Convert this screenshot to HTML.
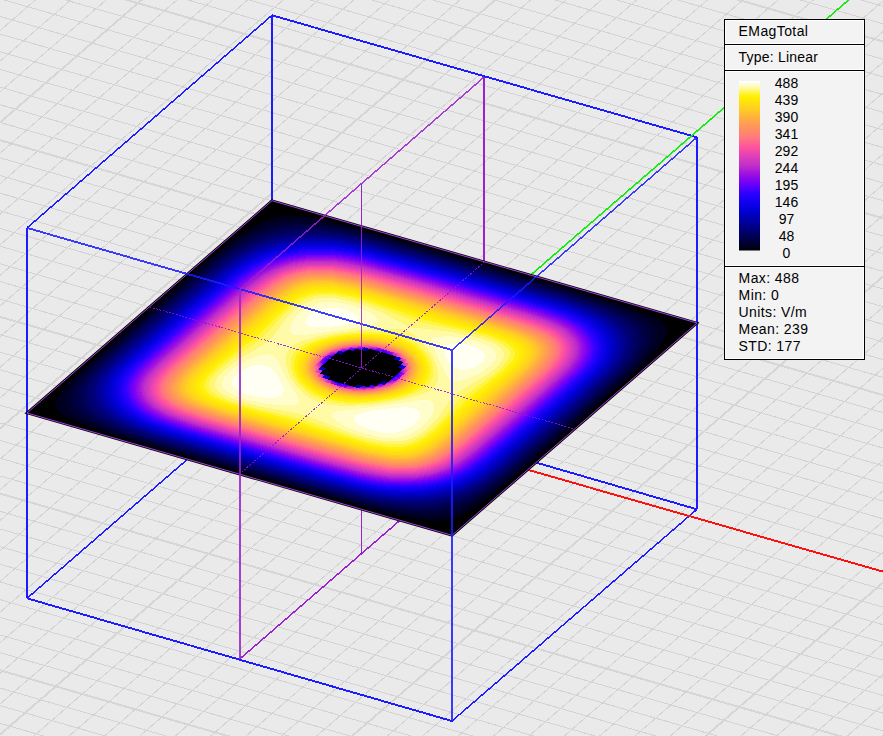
<!DOCTYPE html>
<html><head><meta charset="utf-8"><style>html,body{margin:0;padding:0;background:#eaeaea;overflow:hidden}svg{display:block}</style></head>
<body><svg width="883" height="736" viewBox="0 0 883 736">
<rect width="883" height="736" fill="#eaeaea"/>
<g shape-rendering="crispEdges"><line x1="-115.8" y1="-511.9" x2="2536.2" y2="253.7" stroke="#d3d3d3" stroke-width="1.00"/>
<line x1="-131.1" y1="-498.6" x2="2520.9" y2="267.0" stroke="#d3d3d3" stroke-width="1.00"/>
<line x1="-146.4" y1="-485.4" x2="2505.6" y2="280.2" stroke="#d3d3d3" stroke-width="1.00"/>
<line x1="-161.8" y1="-472.1" x2="2490.2" y2="293.5" stroke="#d3d3d3" stroke-width="1.00"/>
<line x1="-177.1" y1="-458.9" x2="2474.9" y2="306.7" stroke="#d3d3d3" stroke-width="1.00"/>
<line x1="-192.4" y1="-445.6" x2="2459.6" y2="320.0" stroke="#d6d6d6" stroke-width="2.00"/>
<line x1="-207.7" y1="-432.4" x2="2444.3" y2="333.2" stroke="#d3d3d3" stroke-width="1.00"/>
<line x1="-223.0" y1="-419.1" x2="2429.0" y2="346.5" stroke="#d3d3d3" stroke-width="1.00"/>
<line x1="-238.3" y1="-405.9" x2="2413.7" y2="359.7" stroke="#d3d3d3" stroke-width="1.00"/>
<line x1="-253.6" y1="-392.6" x2="2398.4" y2="373.0" stroke="#d3d3d3" stroke-width="1.00"/>
<line x1="-268.9" y1="-379.4" x2="2383.1" y2="386.2" stroke="#d3d3d3" stroke-width="1.00"/>
<line x1="-284.3" y1="-366.1" x2="2367.7" y2="399.5" stroke="#d3d3d3" stroke-width="1.00"/>
<line x1="-299.6" y1="-352.9" x2="2352.4" y2="412.7" stroke="#d3d3d3" stroke-width="1.00"/>
<line x1="-314.9" y1="-339.6" x2="2337.1" y2="426.0" stroke="#d3d3d3" stroke-width="1.00"/>
<line x1="-330.2" y1="-326.4" x2="2321.8" y2="439.2" stroke="#d3d3d3" stroke-width="1.00"/>
<line x1="-345.5" y1="-313.1" x2="2306.5" y2="452.5" stroke="#d6d6d6" stroke-width="2.00"/>
<line x1="-360.8" y1="-299.8" x2="2291.2" y2="465.8" stroke="#d3d3d3" stroke-width="1.00"/>
<line x1="-376.1" y1="-286.6" x2="2275.9" y2="479.0" stroke="#d3d3d3" stroke-width="1.00"/>
<line x1="-391.4" y1="-273.3" x2="2260.6" y2="492.3" stroke="#d3d3d3" stroke-width="1.00"/>
<line x1="-406.8" y1="-260.1" x2="2245.2" y2="505.5" stroke="#d3d3d3" stroke-width="1.00"/>
<line x1="-422.1" y1="-246.8" x2="2229.9" y2="518.8" stroke="#d3d3d3" stroke-width="1.00"/>
<line x1="-437.4" y1="-233.6" x2="2214.6" y2="532.0" stroke="#d3d3d3" stroke-width="1.00"/>
<line x1="-452.7" y1="-220.3" x2="2199.3" y2="545.3" stroke="#d3d3d3" stroke-width="1.00"/>
<line x1="-468.0" y1="-207.1" x2="2184.0" y2="558.5" stroke="#d3d3d3" stroke-width="1.00"/>
<line x1="-483.3" y1="-193.8" x2="2168.7" y2="571.8" stroke="#d3d3d3" stroke-width="1.00"/>
<line x1="-498.6" y1="-180.6" x2="2153.4" y2="585.0" stroke="#d6d6d6" stroke-width="2.00"/>
<line x1="-513.9" y1="-167.3" x2="2138.1" y2="598.3" stroke="#d3d3d3" stroke-width="1.00"/>
<line x1="-529.3" y1="-154.1" x2="2122.7" y2="611.5" stroke="#d3d3d3" stroke-width="1.00"/>
<line x1="-544.6" y1="-140.8" x2="2107.4" y2="624.8" stroke="#d3d3d3" stroke-width="1.00"/>
<line x1="-559.9" y1="-127.6" x2="2092.1" y2="638.0" stroke="#d3d3d3" stroke-width="1.00"/>
<line x1="-575.2" y1="-114.3" x2="2076.8" y2="651.3" stroke="#d3d3d3" stroke-width="1.00"/>
<line x1="-590.5" y1="-101.1" x2="2061.5" y2="664.5" stroke="#d3d3d3" stroke-width="1.00"/>
<line x1="-605.8" y1="-87.8" x2="2046.2" y2="677.8" stroke="#d3d3d3" stroke-width="1.00"/>
<line x1="-621.1" y1="-74.6" x2="2030.9" y2="691.0" stroke="#d3d3d3" stroke-width="1.00"/>
<line x1="-636.4" y1="-61.3" x2="2015.6" y2="704.3" stroke="#d3d3d3" stroke-width="1.00"/>
<line x1="-651.8" y1="-48.0" x2="2000.2" y2="717.6" stroke="#d6d6d6" stroke-width="2.00"/>
<line x1="-667.1" y1="-34.8" x2="1984.9" y2="730.8" stroke="#d3d3d3" stroke-width="1.00"/>
<line x1="-682.4" y1="-21.5" x2="1969.6" y2="744.1" stroke="#d3d3d3" stroke-width="1.00"/>
<line x1="-697.7" y1="-8.3" x2="1954.3" y2="757.3" stroke="#d3d3d3" stroke-width="1.00"/>
<line x1="-713.0" y1="5.0" x2="1939.0" y2="770.6" stroke="#d3d3d3" stroke-width="1.00"/>
<line x1="-728.3" y1="18.2" x2="1923.7" y2="783.8" stroke="#d3d3d3" stroke-width="1.00"/>
<line x1="-743.6" y1="31.5" x2="1908.4" y2="797.1" stroke="#d3d3d3" stroke-width="1.00"/>
<line x1="-759.0" y1="44.7" x2="1893.0" y2="810.3" stroke="#d3d3d3" stroke-width="1.00"/>
<line x1="-774.3" y1="58.0" x2="1877.7" y2="823.6" stroke="#d3d3d3" stroke-width="1.00"/>
<line x1="-789.6" y1="71.2" x2="1862.4" y2="836.8" stroke="#d3d3d3" stroke-width="1.00"/>
<line x1="-804.9" y1="84.5" x2="1847.1" y2="850.1" stroke="#d6d6d6" stroke-width="2.00"/>
<line x1="-820.2" y1="97.7" x2="1831.8" y2="863.3" stroke="#d3d3d3" stroke-width="1.00"/>
<line x1="-835.5" y1="111.0" x2="1816.5" y2="876.6" stroke="#d3d3d3" stroke-width="1.00"/>
<line x1="-850.8" y1="124.2" x2="1801.2" y2="889.8" stroke="#d3d3d3" stroke-width="1.00"/>
<line x1="-866.1" y1="137.5" x2="1785.9" y2="903.1" stroke="#d3d3d3" stroke-width="1.00"/>
<line x1="-881.5" y1="150.7" x2="1770.5" y2="916.3" stroke="#d3d3d3" stroke-width="1.00"/>
<line x1="-896.8" y1="164.0" x2="1755.2" y2="929.6" stroke="#d3d3d3" stroke-width="1.00"/>
<line x1="-912.1" y1="177.2" x2="1739.9" y2="942.8" stroke="#d3d3d3" stroke-width="1.00"/>
<line x1="-927.4" y1="190.5" x2="1724.6" y2="956.1" stroke="#d3d3d3" stroke-width="1.00"/>
<line x1="-942.7" y1="203.8" x2="1709.3" y2="969.4" stroke="#d3d3d3" stroke-width="1.00"/>
<line x1="-958.0" y1="217.0" x2="1694.0" y2="982.6" stroke="#d6d6d6" stroke-width="2.00"/>
<line x1="-973.3" y1="230.3" x2="1678.7" y2="995.9" stroke="#d3d3d3" stroke-width="1.00"/>
<line x1="-988.6" y1="243.5" x2="1663.4" y2="1009.1" stroke="#d3d3d3" stroke-width="1.00"/>
<line x1="-1004.0" y1="256.8" x2="1648.0" y2="1022.4" stroke="#d3d3d3" stroke-width="1.00"/>
<line x1="-1019.3" y1="270.0" x2="1632.7" y2="1035.6" stroke="#d3d3d3" stroke-width="1.00"/>
<line x1="-1034.6" y1="283.3" x2="1617.4" y2="1048.9" stroke="#d3d3d3" stroke-width="1.00"/>
<line x1="-1049.9" y1="296.5" x2="1602.1" y2="1062.1" stroke="#d3d3d3" stroke-width="1.00"/>
<line x1="-1065.2" y1="309.8" x2="1586.8" y2="1075.4" stroke="#d3d3d3" stroke-width="1.00"/>
<line x1="-1080.5" y1="323.0" x2="1571.5" y2="1088.6" stroke="#d3d3d3" stroke-width="1.00"/>
<line x1="-1095.8" y1="336.3" x2="1556.2" y2="1101.9" stroke="#d3d3d3" stroke-width="1.00"/>
<line x1="-1111.1" y1="349.5" x2="1540.9" y2="1115.1" stroke="#d6d6d6" stroke-width="2.00"/>
<line x1="-1126.5" y1="362.8" x2="1525.5" y2="1128.4" stroke="#d3d3d3" stroke-width="1.00"/>
<line x1="-1141.8" y1="376.0" x2="1510.2" y2="1141.6" stroke="#d3d3d3" stroke-width="1.00"/>
<line x1="-1157.1" y1="389.3" x2="1494.9" y2="1154.9" stroke="#d3d3d3" stroke-width="1.00"/>
<line x1="-1172.4" y1="402.5" x2="1479.6" y2="1168.1" stroke="#d3d3d3" stroke-width="1.00"/>
<line x1="-1187.7" y1="415.8" x2="1464.3" y2="1181.4" stroke="#d3d3d3" stroke-width="1.00"/>
<line x1="-1203.0" y1="429.0" x2="1449.0" y2="1194.6" stroke="#d3d3d3" stroke-width="1.00"/>
<line x1="-1218.3" y1="442.3" x2="1433.7" y2="1207.9" stroke="#d3d3d3" stroke-width="1.00"/>
<line x1="-1233.6" y1="455.6" x2="1418.4" y2="1221.2" stroke="#d3d3d3" stroke-width="1.00"/>
<line x1="-1249.0" y1="468.8" x2="1403.0" y2="1234.4" stroke="#d3d3d3" stroke-width="1.00"/>
<line x1="-1264.3" y1="482.1" x2="1387.7" y2="1247.7" stroke="#d6d6d6" stroke-width="2.00"/>
<line x1="-1279.6" y1="495.3" x2="1372.4" y2="1260.9" stroke="#d3d3d3" stroke-width="1.00"/>
<line x1="-1294.9" y1="508.6" x2="1357.1" y2="1274.2" stroke="#d3d3d3" stroke-width="1.00"/>
<line x1="-1310.2" y1="521.8" x2="1341.8" y2="1287.4" stroke="#d3d3d3" stroke-width="1.00"/>
<line x1="-1325.5" y1="535.1" x2="1326.5" y2="1300.7" stroke="#d3d3d3" stroke-width="1.00"/>
<line x1="-1340.8" y1="548.3" x2="1311.2" y2="1313.9" stroke="#d3d3d3" stroke-width="1.00"/>
<line x1="-1356.1" y1="561.6" x2="1295.9" y2="1327.2" stroke="#d3d3d3" stroke-width="1.00"/>
<line x1="-1371.5" y1="574.8" x2="1280.5" y2="1340.4" stroke="#d3d3d3" stroke-width="1.00"/>
<line x1="-1386.8" y1="588.1" x2="1265.2" y2="1353.7" stroke="#d3d3d3" stroke-width="1.00"/>
<line x1="-1402.1" y1="601.3" x2="1249.9" y2="1366.9" stroke="#d3d3d3" stroke-width="1.00"/>
<line x1="-1417.4" y1="614.6" x2="1234.6" y2="1380.2" stroke="#d6d6d6" stroke-width="2.00"/>
<line x1="-1432.7" y1="627.8" x2="1219.3" y2="1393.4" stroke="#d3d3d3" stroke-width="1.00"/>
<line x1="-1448.0" y1="641.1" x2="1204.0" y2="1406.7" stroke="#d3d3d3" stroke-width="1.00"/>
<line x1="-1463.3" y1="654.3" x2="1188.7" y2="1419.9" stroke="#d3d3d3" stroke-width="1.00"/>
<line x1="-1478.6" y1="667.6" x2="1173.4" y2="1433.2" stroke="#d3d3d3" stroke-width="1.00"/>
<line x1="-115.8" y1="-511.9" x2="-1494.0" y2="680.9" stroke="#d3d3d3" stroke-width="1.00"/>
<line x1="-89.3" y1="-504.2" x2="-1467.4" y2="688.5" stroke="#d3d3d3" stroke-width="1.00"/>
<line x1="-62.8" y1="-496.6" x2="-1440.9" y2="696.2" stroke="#d3d3d3" stroke-width="1.00"/>
<line x1="-36.3" y1="-488.9" x2="-1414.4" y2="703.8" stroke="#d3d3d3" stroke-width="1.00"/>
<line x1="-9.7" y1="-481.3" x2="-1387.9" y2="711.5" stroke="#d6d6d6" stroke-width="2.00"/>
<line x1="16.8" y1="-473.6" x2="-1361.4" y2="719.1" stroke="#d3d3d3" stroke-width="1.00"/>
<line x1="43.3" y1="-466.0" x2="-1334.8" y2="726.8" stroke="#d3d3d3" stroke-width="1.00"/>
<line x1="69.8" y1="-458.3" x2="-1308.3" y2="734.4" stroke="#d3d3d3" stroke-width="1.00"/>
<line x1="96.3" y1="-450.6" x2="-1281.8" y2="742.1" stroke="#d3d3d3" stroke-width="1.00"/>
<line x1="122.9" y1="-443.0" x2="-1255.3" y2="749.8" stroke="#d3d3d3" stroke-width="1.00"/>
<line x1="149.4" y1="-435.3" x2="-1228.8" y2="757.4" stroke="#d3d3d3" stroke-width="1.00"/>
<line x1="175.9" y1="-427.7" x2="-1202.2" y2="765.1" stroke="#d3d3d3" stroke-width="1.00"/>
<line x1="202.4" y1="-420.0" x2="-1175.7" y2="772.7" stroke="#d3d3d3" stroke-width="1.00"/>
<line x1="228.9" y1="-412.4" x2="-1149.2" y2="780.4" stroke="#d3d3d3" stroke-width="1.00"/>
<line x1="255.5" y1="-404.7" x2="-1122.7" y2="788.0" stroke="#d6d6d6" stroke-width="2.00"/>
<line x1="282.0" y1="-397.1" x2="-1096.2" y2="795.7" stroke="#d3d3d3" stroke-width="1.00"/>
<line x1="308.5" y1="-389.4" x2="-1069.6" y2="803.3" stroke="#d3d3d3" stroke-width="1.00"/>
<line x1="335.0" y1="-381.7" x2="-1043.1" y2="811.0" stroke="#d3d3d3" stroke-width="1.00"/>
<line x1="361.5" y1="-374.1" x2="-1016.6" y2="818.7" stroke="#d3d3d3" stroke-width="1.00"/>
<line x1="388.1" y1="-366.4" x2="-990.1" y2="826.3" stroke="#d3d3d3" stroke-width="1.00"/>
<line x1="414.6" y1="-358.8" x2="-963.6" y2="834.0" stroke="#d3d3d3" stroke-width="1.00"/>
<line x1="441.1" y1="-351.1" x2="-937.0" y2="841.6" stroke="#d3d3d3" stroke-width="1.00"/>
<line x1="467.6" y1="-343.5" x2="-910.5" y2="849.3" stroke="#d3d3d3" stroke-width="1.00"/>
<line x1="494.1" y1="-335.8" x2="-884.0" y2="856.9" stroke="#d3d3d3" stroke-width="1.00"/>
<line x1="520.7" y1="-328.1" x2="-857.5" y2="864.6" stroke="#d6d6d6" stroke-width="2.00"/>
<line x1="547.2" y1="-320.5" x2="-831.0" y2="872.3" stroke="#d3d3d3" stroke-width="1.00"/>
<line x1="573.7" y1="-312.8" x2="-804.4" y2="879.9" stroke="#d3d3d3" stroke-width="1.00"/>
<line x1="600.2" y1="-305.2" x2="-777.9" y2="887.6" stroke="#d3d3d3" stroke-width="1.00"/>
<line x1="626.7" y1="-297.5" x2="-751.4" y2="895.2" stroke="#d3d3d3" stroke-width="1.00"/>
<line x1="653.3" y1="-289.9" x2="-724.9" y2="902.9" stroke="#d3d3d3" stroke-width="1.00"/>
<line x1="679.8" y1="-282.2" x2="-698.4" y2="910.5" stroke="#d3d3d3" stroke-width="1.00"/>
<line x1="706.3" y1="-274.6" x2="-671.8" y2="918.2" stroke="#d3d3d3" stroke-width="1.00"/>
<line x1="732.8" y1="-266.9" x2="-645.3" y2="925.8" stroke="#d3d3d3" stroke-width="1.00"/>
<line x1="759.3" y1="-259.2" x2="-618.8" y2="933.5" stroke="#d3d3d3" stroke-width="1.00"/>
<line x1="785.9" y1="-251.6" x2="-592.3" y2="941.2" stroke="#d6d6d6" stroke-width="2.00"/>
<line x1="812.4" y1="-243.9" x2="-565.8" y2="948.8" stroke="#d3d3d3" stroke-width="1.00"/>
<line x1="838.9" y1="-236.3" x2="-539.2" y2="956.5" stroke="#d3d3d3" stroke-width="1.00"/>
<line x1="865.4" y1="-228.6" x2="-512.7" y2="964.1" stroke="#d3d3d3" stroke-width="1.00"/>
<line x1="891.9" y1="-221.0" x2="-486.2" y2="971.8" stroke="#d3d3d3" stroke-width="1.00"/>
<line x1="918.5" y1="-213.3" x2="-459.7" y2="979.4" stroke="#d3d3d3" stroke-width="1.00"/>
<line x1="945.0" y1="-205.7" x2="-433.2" y2="987.1" stroke="#d3d3d3" stroke-width="1.00"/>
<line x1="971.5" y1="-198.0" x2="-406.6" y2="994.7" stroke="#d3d3d3" stroke-width="1.00"/>
<line x1="998.0" y1="-190.3" x2="-380.1" y2="1002.4" stroke="#d3d3d3" stroke-width="1.00"/>
<line x1="1024.5" y1="-182.7" x2="-353.6" y2="1010.1" stroke="#d3d3d3" stroke-width="1.00"/>
<line x1="1051.1" y1="-175.0" x2="-327.1" y2="1017.7" stroke="#d6d6d6" stroke-width="2.00"/>
<line x1="1077.6" y1="-167.4" x2="-300.6" y2="1025.4" stroke="#d3d3d3" stroke-width="1.00"/>
<line x1="1104.1" y1="-159.7" x2="-274.0" y2="1033.0" stroke="#d3d3d3" stroke-width="1.00"/>
<line x1="1130.6" y1="-152.1" x2="-247.5" y2="1040.7" stroke="#d3d3d3" stroke-width="1.00"/>
<line x1="1157.1" y1="-144.4" x2="-221.0" y2="1048.3" stroke="#d3d3d3" stroke-width="1.00"/>
<line x1="1183.7" y1="-136.7" x2="-194.5" y2="1056.0" stroke="#d3d3d3" stroke-width="1.00"/>
<line x1="1210.2" y1="-129.1" x2="-168.0" y2="1063.7" stroke="#d3d3d3" stroke-width="1.00"/>
<line x1="1236.7" y1="-121.4" x2="-141.4" y2="1071.3" stroke="#d3d3d3" stroke-width="1.00"/>
<line x1="1263.2" y1="-113.8" x2="-114.9" y2="1079.0" stroke="#d3d3d3" stroke-width="1.00"/>
<line x1="1289.7" y1="-106.1" x2="-88.4" y2="1086.6" stroke="#d3d3d3" stroke-width="1.00"/>
<line x1="1316.3" y1="-98.5" x2="-61.9" y2="1094.3" stroke="#d6d6d6" stroke-width="2.00"/>
<line x1="1342.8" y1="-90.8" x2="-35.4" y2="1101.9" stroke="#d3d3d3" stroke-width="1.00"/>
<line x1="1369.3" y1="-83.2" x2="-8.8" y2="1109.6" stroke="#d3d3d3" stroke-width="1.00"/>
<line x1="1395.8" y1="-75.5" x2="17.7" y2="1117.2" stroke="#d3d3d3" stroke-width="1.00"/>
<line x1="1422.3" y1="-67.8" x2="44.2" y2="1124.9" stroke="#d3d3d3" stroke-width="1.00"/>
<line x1="1448.9" y1="-60.2" x2="70.7" y2="1132.6" stroke="#d3d3d3" stroke-width="1.00"/>
<line x1="1475.4" y1="-52.5" x2="97.2" y2="1140.2" stroke="#d3d3d3" stroke-width="1.00"/>
<line x1="1501.9" y1="-44.9" x2="123.8" y2="1147.9" stroke="#d3d3d3" stroke-width="1.00"/>
<line x1="1528.4" y1="-37.2" x2="150.3" y2="1155.5" stroke="#d3d3d3" stroke-width="1.00"/>
<line x1="1554.9" y1="-29.6" x2="176.8" y2="1163.2" stroke="#d3d3d3" stroke-width="1.00"/>
<line x1="1581.5" y1="-21.9" x2="203.3" y2="1170.8" stroke="#d6d6d6" stroke-width="2.00"/>
<line x1="1608.0" y1="-14.3" x2="229.8" y2="1178.5" stroke="#d3d3d3" stroke-width="1.00"/>
<line x1="1634.5" y1="-6.6" x2="256.4" y2="1186.1" stroke="#d3d3d3" stroke-width="1.00"/>
<line x1="1661.0" y1="1.1" x2="282.9" y2="1193.8" stroke="#d3d3d3" stroke-width="1.00"/>
<line x1="1687.5" y1="8.7" x2="309.4" y2="1201.5" stroke="#d3d3d3" stroke-width="1.00"/>
<line x1="1714.1" y1="16.4" x2="335.9" y2="1209.1" stroke="#d3d3d3" stroke-width="1.00"/>
<line x1="1740.6" y1="24.0" x2="362.4" y2="1216.8" stroke="#d3d3d3" stroke-width="1.00"/>
<line x1="1767.1" y1="31.7" x2="389.0" y2="1224.4" stroke="#d3d3d3" stroke-width="1.00"/>
<line x1="1793.6" y1="39.3" x2="415.5" y2="1232.1" stroke="#d3d3d3" stroke-width="1.00"/>
<line x1="1820.1" y1="47.0" x2="442.0" y2="1239.7" stroke="#d3d3d3" stroke-width="1.00"/>
<line x1="1846.7" y1="54.7" x2="468.5" y2="1247.4" stroke="#d6d6d6" stroke-width="2.00"/>
<line x1="1873.2" y1="62.3" x2="495.0" y2="1255.1" stroke="#d3d3d3" stroke-width="1.00"/>
<line x1="1899.7" y1="70.0" x2="521.6" y2="1262.7" stroke="#d3d3d3" stroke-width="1.00"/>
<line x1="1926.2" y1="77.6" x2="548.1" y2="1270.4" stroke="#d3d3d3" stroke-width="1.00"/>
<line x1="1952.7" y1="85.3" x2="574.6" y2="1278.0" stroke="#d3d3d3" stroke-width="1.00"/>
<line x1="1979.3" y1="92.9" x2="601.1" y2="1285.7" stroke="#d3d3d3" stroke-width="1.00"/>
<line x1="2005.8" y1="100.6" x2="627.6" y2="1293.3" stroke="#d3d3d3" stroke-width="1.00"/>
<line x1="2032.3" y1="108.2" x2="654.2" y2="1301.0" stroke="#d3d3d3" stroke-width="1.00"/>
<line x1="2058.8" y1="115.9" x2="680.7" y2="1308.6" stroke="#d3d3d3" stroke-width="1.00"/>
<line x1="2085.3" y1="123.6" x2="707.2" y2="1316.3" stroke="#d3d3d3" stroke-width="1.00"/>
<line x1="2111.9" y1="131.2" x2="733.7" y2="1324.0" stroke="#d6d6d6" stroke-width="2.00"/>
<line x1="2138.4" y1="138.9" x2="760.2" y2="1331.6" stroke="#d3d3d3" stroke-width="1.00"/>
<line x1="2164.9" y1="146.5" x2="786.8" y2="1339.3" stroke="#d3d3d3" stroke-width="1.00"/>
<line x1="2191.4" y1="154.2" x2="813.3" y2="1346.9" stroke="#d3d3d3" stroke-width="1.00"/>
<line x1="2217.9" y1="161.8" x2="839.8" y2="1354.6" stroke="#d3d3d3" stroke-width="1.00"/>
<line x1="2244.5" y1="169.5" x2="866.3" y2="1362.2" stroke="#d3d3d3" stroke-width="1.00"/>
<line x1="2271.0" y1="177.1" x2="892.8" y2="1369.9" stroke="#d3d3d3" stroke-width="1.00"/>
<line x1="2297.5" y1="184.8" x2="919.4" y2="1377.5" stroke="#d3d3d3" stroke-width="1.00"/>
<line x1="2324.0" y1="192.5" x2="945.9" y2="1385.2" stroke="#d3d3d3" stroke-width="1.00"/>
<line x1="2350.5" y1="200.1" x2="972.4" y2="1392.9" stroke="#d3d3d3" stroke-width="1.00"/>
<line x1="2377.1" y1="207.8" x2="998.9" y2="1400.5" stroke="#d6d6d6" stroke-width="2.00"/>
<line x1="2403.6" y1="215.4" x2="1025.4" y2="1408.2" stroke="#d3d3d3" stroke-width="1.00"/>
<line x1="2430.1" y1="223.1" x2="1052.0" y2="1415.8" stroke="#d3d3d3" stroke-width="1.00"/>
<line x1="2456.6" y1="230.7" x2="1078.5" y2="1423.5" stroke="#d3d3d3" stroke-width="1.00"/>
<line x1="2483.1" y1="238.4" x2="1105.0" y2="1431.1" stroke="#d3d3d3" stroke-width="1.00"/>
<line x1="2509.7" y1="246.1" x2="1131.5" y2="1438.8" stroke="#d3d3d3" stroke-width="1.00"/></g>
<g shape-rendering="crispEdges"><line x1="272.0" y1="15.3" x2="272.0" y2="386.0" stroke="#1c1cff" stroke-width="2.00"/>
<line x1="272.0" y1="386.0" x2="697.0" y2="509.3" stroke="#1c1cff" stroke-width="1.92"/>
<line x1="272.0" y1="386.0" x2="27.0" y2="598.3" stroke="#1c1cff" stroke-width="1.51"/>
<line x1="27.0" y1="598.3" x2="452.0" y2="721.0" stroke="#1c1cff" stroke-width="1.92"/>
<line x1="452.0" y1="721.0" x2="697.0" y2="509.3" stroke="#1c1cff" stroke-width="1.51"/>
<line x1="27.0" y1="227.9" x2="27.0" y2="598.3" stroke="#1c1cff" stroke-width="2.00"/>
<line x1="697.0" y1="137.3" x2="697.0" y2="509.3" stroke="#1c1cff" stroke-width="2.00"/>
<line x1="272.0" y1="15.3" x2="697.0" y2="137.3" stroke="#1c1cff" stroke-width="1.92"/>
<line x1="272.0" y1="15.3" x2="27.0" y2="227.9" stroke="#1c1cff" stroke-width="1.51"/>
<line x1="484.0" y1="77.2" x2="484.0" y2="447.6" stroke="#9a22cc" stroke-width="2.00"/>
<line x1="484.0" y1="447.6" x2="240.0" y2="658.8" stroke="#9a22cc" stroke-width="1.51"/>
<line x1="361.5" y1="183.6" x2="361.5" y2="554.2" stroke="#9a22cc" stroke-width="1.00"/>
<line x1="361.0" y1="422.0" x2="961.0" y2="594.0" stroke="#ff1010" stroke-width="1.92"/>
<line x1="531.4" y1="274.4" x2="931.4" y2="-71.8" stroke="#10ee10" stroke-width="1.51"/></g>
<polygon points="272.0,200.7 697.0,323.0 452.0,535.3 27.0,413.0" fill="#000" stroke="#000" stroke-width="2.5" stroke-linejoin="miter"/>
<g shape-rendering="crispEdges"><path fill="#00001e" fill-rule="evenodd" d="M55.8,406.2 57.8,410.5 60.5,413.2 65.8,416.8 76.2,421.8 101.5,431.0 150.5,446.0 376.0,510.2 400.2,516.0 419.0,519.5 431.5,520.8 444.0,520.2 457.2,516.8 471.8,509.2 491.0,495.8 515.8,475.5 608.8,395.0 642.5,364.8 655.2,351.8 663.2,341.8 666.8,334.5 667.0,329.5 665.2,325.8 661.5,322.0 656.5,318.8 646.0,313.8 616.2,303.0 575.2,290.5 354.8,227.5 325.8,220.5 307.2,217.0 293.5,215.5 280.0,216.0 267.2,219.2 251.5,227.2 231.5,241.2 207.5,260.8 81.8,370.2 68.2,383.8 60.0,393.8 56.8,399.5 55.8,402.8ZM321.0,366.5 336.2,353.2 341.5,354.8 347.5,349.5 353.0,351.0 355.8,348.5 366.5,351.5 369.8,348.8 396.0,356.2 393.5,359.2 398.2,360.5 395.8,363.2 400.8,365.0 397.8,367.5 402.8,369.2 387.5,382.5 382.2,381.0 376.2,386.2 370.8,384.8 368.0,387.2 357.2,384.2 354.0,387.0 327.8,379.5 330.2,376.5 325.5,375.2 328.0,372.5 323.0,370.8 326.0,368.2Z"/>
<path fill="#00002d" fill-rule="evenodd" d="M64.8,403.5 66.5,408.2 71.0,413.2 77.2,417.5 86.0,422.0 108.8,431.0 142.2,441.8 327.8,495.2 373.5,507.5 395.2,512.2 414.0,515.2 426.5,516.2 440.0,515.8 448.5,514.2 457.5,511.5 471.8,504.8 491.0,492.2 513.2,474.5 603.8,396.2 633.8,369.2 644.8,357.8 652.8,347.5 656.5,340.5 657.8,332.8 656.0,327.8 653.0,324.0 646.8,319.2 637.0,314.0 612.5,304.2 578.0,293.2 395.0,240.5 352.0,229.0 329.0,224.0 311.8,221.2 301.0,220.2 283.2,220.8 268.2,224.2 251.8,231.8 232.0,244.5 208.2,263.2 91.2,365.0 79.2,377.0 71.0,387.0 66.0,395.8ZM320.0,373.5 326.0,368.2 321.0,366.8 335.8,353.5 341.5,354.8 347.5,349.5 353.0,351.0 355.8,348.5 366.5,351.5 369.8,348.8 396.0,356.2 393.5,359.2 403.8,362.2 397.8,367.5 402.8,369.0 388.0,382.2 382.2,381.0 376.2,386.2 370.8,384.8 368.0,387.2 357.2,384.2 354.0,387.0 327.8,379.5 330.2,376.5Z"/>
<path fill="#00003d" fill-rule="evenodd" d="M71.2,401.0 72.2,405.2 75.2,410.0 80.5,414.8 89.5,420.2 114.0,430.8 145.2,441.0 322.8,492.2 368.5,504.5 388.2,508.8 409.2,512.0 423.5,513.0 439.0,512.2 456.8,508.0 473.8,500.2 492.5,488.2 511.8,473.0 623.2,376.0 635.2,364.0 644.0,353.2 649.5,343.5 651.0,335.0 650.0,330.8 647.2,326.2 642.5,321.8 634.0,316.2 613.0,306.8 575.5,294.2 398.8,243.2 359.8,232.8 335.5,227.5 315.8,224.5 301.8,223.5 285.2,224.2 267.2,228.5 250.0,236.2 231.2,248.0 214.0,261.2 97.0,362.8 86.0,373.8 77.0,385.0 72.2,394.2ZM320.0,373.5 326.0,368.2 321.0,366.8 335.8,353.5 341.5,354.8 347.5,349.5 353.0,351.0 355.8,348.5 366.5,351.5 369.8,348.8 396.0,356.2 393.5,359.2 403.8,362.2 397.8,367.5 402.8,369.0 388.0,382.2 382.2,381.0 376.2,386.2 370.8,384.8 368.0,387.2 357.2,384.2 354.0,387.0 327.8,379.5 330.2,376.5Z"/>
<path fill="#00004a" fill-rule="evenodd" d="M76.8,400.8 78.0,405.0 80.8,409.2 86.0,414.2 94.5,419.8 117.2,430.0 149.5,440.8 321.8,490.5 365.8,502.2 387.5,506.8 407.0,509.5 417.8,510.2 437.2,509.5 453.5,506.0 466.5,501.0 483.5,491.8 506.2,475.0 593.0,400.2 622.0,374.2 632.5,363.2 640.0,353.2 643.8,346.0 645.5,336.8 644.2,331.5 640.5,325.8 635.5,321.2 628.2,316.5 605.5,306.0 574.2,295.5 398.5,244.8 359.0,234.2 340.0,230.2 319.5,227.2 304.5,226.2 287.8,227.0 271.8,230.2 256.5,236.0 234.8,248.2 215.0,263.0 134.8,332.0 98.8,364.0 88.5,374.8 80.8,385.5 77.5,392.8ZM320.0,373.5 326.0,368.2 321.0,366.8 335.8,353.5 341.5,354.8 347.5,349.5 353.0,351.0 355.8,348.5 366.5,351.5 369.8,348.8 396.0,356.2 393.5,359.2 403.8,362.2 397.8,367.5 402.8,369.0 388.0,382.2 382.2,381.0 376.2,386.2 370.8,384.8 368.0,387.2 357.2,384.2 354.0,387.0 327.8,379.5 330.2,376.5Z"/>
<path fill="#000058" fill-rule="evenodd" d="M81.2,398.8 82.5,403.8 86.0,409.2 91.0,414.0 99.2,419.5 122.0,430.0 154.2,440.8 322.2,489.2 362.5,500.0 382.8,504.2 402.0,507.0 416.2,508.0 435.0,507.2 453.0,503.5 468.0,497.8 486.8,487.2 505.8,473.0 581.0,408.2 617.0,376.2 628.5,364.2 635.8,354.2 639.8,345.5 640.8,338.0 639.5,332.5 636.5,327.5 632.8,323.5 625.8,318.2 604.2,307.5 573.2,296.8 404.8,248.0 359.8,236.0 337.0,231.5 319.0,229.2 291.0,229.2 273.5,232.5 256.2,238.8 237.8,248.8 216.8,264.0 148.5,322.5 103.8,362.0 93.8,372.2 86.2,382.2 82.2,390.8ZM320.0,373.5 326.0,368.2 321.0,366.8 335.8,353.5 341.5,354.8 347.5,349.5 353.0,351.0 355.8,348.5 366.5,351.5 369.8,348.8 396.0,356.2 393.5,359.2 403.8,362.2 397.8,367.5 402.8,369.0 388.0,382.2 382.2,381.0 376.2,386.2 370.8,384.8 368.0,387.2 357.2,384.2 354.0,387.0 327.8,379.5 330.2,376.5Z"/>
<path fill="#000065" fill-rule="evenodd" d="M85.2,396.5 86.2,402.0 89.2,407.5 94.5,413.0 101.0,417.8 119.0,427.0 148.2,437.5 319.0,487.0 361.0,498.2 381.5,502.5 402.0,505.2 415.2,506.0 432.8,505.2 450.0,502.0 469.0,495.0 485.2,486.0 506.0,470.5 591.5,396.8 619.8,370.8 627.5,361.8 632.2,354.5 635.5,347.0 636.5,338.5 635.5,334.0 632.5,328.5 627.0,322.8 620.5,318.0 602.0,308.5 573.2,298.2 401.5,248.5 363.0,238.2 343.8,234.2 323.2,231.5 311.0,230.8 291.5,231.5 273.2,235.0 256.0,241.2 237.8,251.0 220.2,263.5 168.5,307.5 106.5,362.0 97.5,371.2 91.0,379.8 87.0,387.5ZM320.0,373.5 326.0,368.2 321.0,366.8 335.8,353.5 341.5,354.8 347.5,349.5 353.0,351.0 355.8,348.5 366.5,351.5 369.8,348.8 396.0,356.2 393.5,359.2 403.8,362.2 397.8,367.5 402.8,369.0 388.0,382.2 382.2,381.0 376.2,386.2 370.8,384.8 368.0,387.2 357.2,384.2 354.0,387.0 327.8,379.5 330.2,376.5Z"/>
<path fill="#000072" fill-rule="evenodd" d="M89.0,396.5 90.2,402.0 94.0,408.2 98.8,413.0 105.2,417.8 123.8,427.2 151.0,437.0 318.2,485.5 360.2,496.8 378.2,500.5 398.0,503.2 408.2,504.0 430.2,503.5 450.5,499.8 468.8,493.0 486.2,483.2 504.5,469.5 589.8,396.0 617.5,370.2 624.2,362.2 629.8,353.2 632.2,346.0 632.5,338.0 630.0,331.2 626.8,326.8 620.8,321.2 614.5,317.0 597.0,308.2 567.0,297.8 405.5,251.0 365.5,240.2 346.5,236.2 326.5,233.5 315.8,232.8 294.5,233.2 274.0,237.0 255.8,243.5 238.8,252.5 220.5,265.5 181.5,298.5 111.2,360.0 100.2,371.2 93.5,380.5 89.8,389.2ZM320.0,373.5 326.0,368.2 321.0,366.8 335.8,353.5 341.5,354.8 347.5,349.5 353.0,351.0 355.8,348.5 366.5,351.5 369.8,348.8 396.0,356.2 393.5,359.2 403.8,362.2 397.8,367.5 402.8,369.0 388.0,382.2 382.2,381.0 376.2,386.2 370.8,384.8 368.0,387.2 357.2,384.2 354.0,387.0 327.8,379.5 330.2,376.5Z"/>
<path fill="#00007f" fill-rule="evenodd" d="M92.5,396.8 93.8,401.5 97.2,407.5 103.0,413.2 110.8,418.8 128.2,427.5 156.0,437.2 274.5,471.8 357.2,494.8 380.2,499.5 398.0,501.8 429.5,501.8 449.8,498.0 467.8,491.5 483.5,483.0 502.5,469.0 589.5,394.0 613.0,372.2 620.0,364.2 625.0,356.8 628.2,349.0 629.2,341.2 627.8,334.5 624.8,329.2 620.2,324.2 615.0,320.0 607.5,315.2 595.2,309.2 570.5,300.2 440.2,262.2 365.0,241.5 342.5,237.0 325.8,235.0 303.5,234.5 293.8,235.2 274.0,239.0 264.5,242.0 252.5,247.0 238.0,255.0 217.2,270.2 126.5,348.5 106.0,367.8 99.0,376.2 94.5,384.2 92.5,391.5ZM320.0,373.5 326.0,368.2 321.0,366.8 335.8,353.5 341.5,354.8 347.5,349.5 353.0,351.0 355.8,348.5 366.5,351.5 369.8,348.8 396.0,356.2 393.5,359.2 403.8,362.2 397.8,367.5 402.8,369.0 388.0,382.2 382.2,381.0 376.2,386.2 370.8,384.8 368.0,387.2 357.2,384.2 354.0,387.0 327.8,379.5 330.2,376.5Z"/>
<path fill="#00008d" fill-rule="evenodd" d="M95.5,394.5 96.8,400.5 100.2,406.8 110.2,416.0 118.8,421.2 128.5,426.0 154.5,435.5 271.8,469.8 358.2,493.8 374.8,497.2 394.5,500.0 405.0,500.8 427.5,500.2 449.5,496.2 467.0,490.0 483.2,481.2 500.2,468.8 574.8,404.8 610.2,372.5 618.5,362.8 623.0,355.2 625.8,346.5 625.8,339.8 624.0,334.0 620.5,328.5 616.5,324.2 608.2,318.0 589.5,308.5 563.0,299.2 413.0,255.8 364.8,242.8 349.2,239.5 329.0,236.8 315.0,236.0 296.2,236.8 280.5,239.2 259.0,246.0 239.5,256.0 222.0,268.5 175.5,308.0 115.5,360.8 105.0,371.8 99.8,379.2 96.5,386.8ZM320.0,373.5 326.0,368.2 321.0,366.8 335.8,353.5 341.5,354.8 347.5,349.5 353.0,351.0 355.8,348.5 366.5,351.5 369.8,348.8 396.0,356.2 393.5,359.2 403.8,362.2 397.8,367.5 402.8,369.0 388.0,382.2 382.2,381.0 376.2,386.2 370.8,384.8 368.0,387.2 357.2,384.2 354.0,387.0 327.8,379.5 330.2,376.5Z"/>
<path fill="#00009a" fill-rule="evenodd" d="M98.5,394.2 99.8,400.0 102.5,405.2 108.0,411.5 114.8,416.8 133.2,426.5 159.2,435.8 318.8,482.0 358.0,492.5 374.8,496.0 392.8,498.5 403.0,499.2 426.5,498.8 443.8,496.0 464.8,489.2 481.5,480.5 497.8,468.8 581.5,396.8 608.8,371.5 616.0,362.8 620.8,354.2 622.8,347.0 622.8,340.8 621.5,336.0 618.8,330.8 613.2,324.5 607.2,319.8 600.0,315.2 589.2,310.0 562.8,300.5 452.2,268.2 366.8,244.5 350.2,241.0 330.0,238.2 297.8,238.2 280.5,241.0 258.5,248.0 244.2,255.0 225.5,267.8 191.5,296.2 119.5,359.2 110.5,368.2 103.5,377.2 99.8,385.0ZM320.0,373.5 326.0,368.2 321.0,366.8 335.8,353.5 338.5,353.8 343.0,352.0 344.5,352.2 347.5,349.5 353.0,351.0 355.8,348.5 361.2,350.0 368.5,349.8 369.8,348.8 396.0,356.2 393.5,359.2 403.8,362.2 397.8,367.5 402.8,369.0 388.0,382.2 385.2,382.0 380.8,383.8 379.2,383.5 376.2,386.2 370.8,384.8 368.0,387.2 362.5,385.8 355.2,386.0 354.0,387.0 327.8,379.5 330.2,376.5Z"/>
<path fill="#0000a7" fill-rule="evenodd" d="M101.2,393.0 102.0,397.8 104.5,403.5 108.0,408.2 116.2,415.5 123.8,420.2 135.0,425.8 160.8,435.0 312.2,479.0 358.8,491.5 373.0,494.5 393.0,497.2 405.8,498.0 426.5,497.2 442.2,494.8 453.5,491.8 463.8,488.0 480.2,479.5 494.0,469.8 580.0,396.0 607.5,370.2 613.0,363.5 617.5,355.8 619.8,348.5 620.0,342.5 618.5,336.2 615.5,330.8 608.8,323.5 604.2,320.0 586.8,310.5 561.0,301.2 437.5,265.2 366.8,245.8 348.8,242.0 331.8,239.8 319.0,239.0 298.2,239.8 275.0,244.0 257.8,250.0 241.8,258.2 224.5,270.5 176.5,311.2 119.8,361.2 110.5,371.0 105.5,378.0 102.0,386.2ZM320.0,373.5 325.2,368.8 325.2,368.0 321.0,366.8 335.8,353.5 342.5,351.5 344.5,352.2 347.5,349.5 353.0,351.0 355.8,348.5 361.2,350.0 362.2,349.0 369.8,348.8 396.0,356.2 393.8,358.8 394.2,359.5 403.8,362.2 398.5,367.0 398.5,367.8 402.8,369.0 388.0,382.2 381.2,384.2 379.2,383.5 376.2,386.2 370.8,384.8 368.0,387.2 362.5,385.8 361.5,386.8 354.0,387.0 327.8,379.5 330.0,377.0 329.5,376.2Z"/>
<path fill="#0000b4" fill-rule="evenodd" d="M104.0,393.8 105.5,399.8 108.8,405.5 114.0,411.2 119.0,415.2 135.5,424.5 158.2,433.0 279.5,468.5 357.2,490.0 372.5,493.2 392.8,496.0 424.5,496.0 443.2,493.0 461.8,487.2 478.2,479.0 494.8,467.2 580.2,393.8 604.5,371.0 611.5,362.2 615.2,355.2 617.0,349.0 617.2,343.0 615.8,336.8 613.8,332.8 610.0,327.8 602.8,321.2 586.0,311.8 563.2,303.2 438.5,266.8 364.8,246.5 344.2,242.5 331.5,241.0 308.0,240.5 298.0,241.2 276.2,245.2 259.2,251.0 241.8,260.0 227.2,270.2 140.0,345.0 114.8,368.8 110.5,374.0 106.0,381.8 104.2,387.8ZM403.8,362.2 399.2,366.2 399.5,368.0 402.8,369.0 387.2,382.8 382.8,384.5 379.2,383.5 376.2,386.2 370.8,384.8 368.0,387.2 362.5,385.8 360.5,387.5 355.0,387.2 327.8,379.5 329.5,377.5 327.8,375.8 320.0,373.5 324.5,369.5 324.2,367.8 321.0,366.8 336.5,353.0 341.0,351.2 344.5,352.2 347.5,349.5 353.0,351.0 355.8,348.5 361.2,350.0 363.2,348.2 368.8,348.5 396.0,356.2 394.2,358.2 396.0,360.0Z"/>
<path fill="#0000c2" fill-rule="evenodd" d="M106.5,392.8 107.5,397.8 109.8,402.8 113.0,407.2 120.2,414.0 128.2,419.2 138.8,424.5 163.5,433.5 287.8,469.8 357.8,489.0 373.2,492.2 392.0,494.8 423.5,494.8 442.5,491.8 462.2,485.5 477.5,477.8 493.0,466.8 574.0,397.2 601.8,371.5 608.5,363.2 612.5,356.0 614.5,349.0 614.5,342.5 612.8,336.2 609.5,330.8 604.2,325.0 597.5,319.8 580.2,310.8 557.8,302.8 404.5,258.2 365.0,247.8 344.5,243.8 331.5,242.2 310.5,241.8 299.5,242.5 281.2,245.5 260.0,252.2 242.5,261.2 227.8,271.8 189.8,303.8 127.2,358.5 117.2,368.5 111.2,376.2 107.5,384.2ZM403.8,362.2 400.2,365.5 400.5,368.2 402.8,369.0 386.0,384.0 383.0,384.8 379.2,383.5 376.2,386.2 370.8,384.8 368.0,387.2 362.5,385.8 360.0,388.0 357.2,388.0 327.8,379.5 328.8,377.8 326.5,375.5 320.0,373.5 323.5,370.2 323.2,367.5 321.0,366.8 337.8,351.8 340.8,351.0 344.5,352.2 347.5,349.5 353.0,351.0 355.8,348.5 361.2,350.0 363.8,347.8 366.5,347.8 396.0,356.2 395.0,358.0 397.2,360.2Z"/>
<path fill="#0000cf" fill-rule="evenodd" d="M109.0,393.0 110.8,399.5 113.8,404.8 119.8,411.2 124.5,415.0 140.2,423.8 164.0,432.5 315.2,476.5 359.2,488.2 378.5,492.0 393.8,493.8 423.0,493.5 443.0,490.2 460.5,484.8 477.2,476.2 492.2,465.5 575.8,393.8 599.8,371.2 605.5,364.2 610.0,356.5 612.0,349.2 612.0,343.0 610.2,336.8 607.2,331.5 597.0,321.5 589.5,316.8 579.8,312.0 556.2,303.5 418.0,263.2 364.2,248.8 345.0,245.0 332.0,243.5 311.8,243.0 300.5,243.8 282.0,246.8 260.0,253.8 244.0,262.0 228.5,273.0 144.5,345.0 119.5,368.5 114.5,374.8 110.8,381.5 109.0,388.2ZM403.8,362.2 401.0,364.8 401.5,368.5 402.8,369.0 384.8,385.0 379.2,383.5 376.2,386.2 370.8,384.8 368.0,387.2 362.5,385.8 359.0,388.5 327.8,379.5 328.2,378.5 325.0,375.0 320.0,373.5 322.8,371.0 322.2,367.2 321.0,366.8 339.0,350.8 344.5,352.2 347.5,349.5 353.0,351.0 355.8,348.5 361.2,350.0 364.8,347.2 396.0,356.2 395.5,357.2 398.8,360.8Z"/>
<path fill="#0400d8" fill-rule="evenodd" d="M111.2,391.2 112.8,398.2 116.0,404.2 122.8,411.5 127.2,415.0 142.2,423.2 166.0,432.0 291.0,468.5 357.5,486.8 373.0,490.0 392.0,492.5 411.5,493.0 423.0,492.2 441.5,489.2 461.2,483.0 476.2,475.2 490.2,465.2 569.0,397.8 598.0,370.8 603.5,364.0 607.5,357.0 609.2,351.8 609.8,344.8 608.2,338.2 604.8,331.8 598.2,324.8 593.8,321.2 578.8,313.0 554.0,304.0 406.0,261.0 365.8,250.2 348.8,246.8 333.0,244.8 311.8,244.2 301.0,245.0 282.5,248.0 264.2,253.5 249.2,260.5 232.8,271.5 198.2,300.2 128.2,361.8 119.8,370.8 115.2,377.0 112.0,384.5ZM403.8,362.2 401.0,364.8 402.5,365.5 402.8,369.2 384.8,385.0 379.2,383.5 376.2,386.2 370.8,384.8 368.0,387.2 362.5,385.8 359.0,388.5 327.8,379.5 324.2,375.8 325.0,375.0 320.0,373.5 322.8,371.0 321.2,370.2 321.0,366.5 339.0,350.8 344.5,352.2 347.5,349.5 353.0,351.0 355.8,348.5 361.2,350.0 364.8,347.2 396.0,356.2 399.5,360.0 398.8,360.8Z"/>
<path fill="#0900e1" fill-rule="evenodd" d="M113.5,390.0 114.2,395.5 116.8,401.5 120.5,406.8 127.2,413.0 142.5,422.0 168.8,431.8 287.8,466.5 357.8,485.8 373.2,489.0 390.2,491.2 421.0,491.2 438.0,488.8 456.5,483.5 471.5,476.5 489.2,464.2 560.2,403.5 593.2,373.5 599.2,366.8 604.8,358.2 607.2,350.2 607.2,343.8 605.5,337.5 602.5,332.2 598.0,327.0 591.2,321.5 575.5,313.0 551.0,304.2 405.5,262.0 366.2,251.5 352.2,248.5 334.2,246.0 303.5,246.0 286.2,248.5 268.0,253.5 250.2,261.5 234.8,271.8 202.8,298.2 132.2,360.0 124.8,367.5 118.5,375.2 115.0,382.0ZM403.8,362.2 401.0,364.8 403.8,365.8 404.0,368.2 384.8,385.0 379.2,383.5 376.2,386.2 370.8,384.8 368.0,387.2 362.5,385.8 359.0,388.5 326.0,379.0 323.5,376.5 325.0,375.0 320.0,373.5 322.8,371.0 320.0,370.0 319.8,367.5 339.0,350.8 344.5,352.2 347.5,349.5 353.0,351.0 355.8,348.5 361.2,350.0 364.8,347.2 397.8,356.8 400.2,359.2 398.8,360.8Z"/>
<path fill="#0d00ea" fill-rule="evenodd" d="M115.8,391.0 116.8,396.2 119.2,401.8 122.8,406.5 129.5,412.8 142.2,420.5 165.2,429.5 275.8,462.0 359.0,485.0 376.5,488.5 390.8,490.2 410.8,490.8 422.0,490.0 441.5,486.8 456.2,482.2 471.0,475.2 487.0,464.2 567.2,395.5 593.2,371.2 599.0,364.2 603.2,356.8 605.0,350.5 605.0,344.2 603.5,338.5 600.0,332.2 590.2,322.8 582.8,318.0 574.0,313.8 551.2,305.5 437.5,272.2 365.8,252.5 350.2,249.2 335.8,247.2 323.2,246.5 303.0,247.2 284.0,250.2 266.2,255.5 249.0,263.8 233.8,274.2 189.2,311.8 130.8,363.5 124.0,370.8 119.2,377.5 116.5,384.0ZM405.2,366.2 404.8,367.8 384.8,385.0 379.2,383.5 376.2,386.2 370.8,384.8 368.0,387.2 362.5,385.8 359.5,388.5 324.2,378.5 322.8,377.2 325.0,375.0 320.0,373.5 322.8,371.0 318.5,369.5 319.0,368.0 339.0,350.8 344.5,352.2 347.5,349.5 353.0,351.0 355.8,348.5 361.2,350.0 364.2,347.2 399.5,357.2 401.0,358.5 398.8,360.8 403.8,362.2 401.0,364.8Z"/>
<path fill="#1300f1" fill-rule="evenodd" d="M118.0,391.8 119.2,397.0 121.8,402.0 124.5,405.8 132.0,412.8 147.2,421.5 172.5,430.8 317.0,472.8 360.2,484.2 378.2,487.8 391.2,489.2 407.5,489.8 420.8,489.0 439.5,486.0 456.8,480.8 469.8,474.5 485.8,463.5 544.5,413.5 585.2,377.2 592.5,369.8 598.8,361.5 602.0,354.2 603.0,346.5 601.8,340.0 599.2,334.8 595.8,330.0 590.2,324.8 581.2,318.8 574.2,315.2 551.5,306.8 432.8,272.0 368.5,254.2 349.8,250.2 334.8,248.2 304.8,248.2 286.2,251.0 266.5,256.8 250.8,264.2 236.0,274.2 201.5,303.0 136.8,359.8 128.5,368.0 121.8,376.8 118.8,383.5ZM406.0,366.5 384.8,385.0 379.2,383.5 376.2,386.2 370.8,384.8 368.0,387.2 362.5,385.8 359.5,388.5 322.5,378.0 322.2,377.5 325.0,375.0 320.2,373.8 322.8,371.0 317.8,369.2 339.0,350.8 344.5,352.2 347.5,349.5 353.0,351.0 355.8,348.5 361.2,350.0 364.2,347.2 401.2,357.8 401.5,358.2 398.8,360.8 403.5,362.0 401.0,364.8Z"/>
<path fill="#1c00f6" fill-rule="evenodd" d="M120.0,390.5 121.0,395.8 123.5,401.2 127.0,406.0 133.5,412.0 148.5,420.8 172.0,429.5 276.0,460.0 359.2,483.0 376.8,486.5 391.5,488.2 419.8,488.0 438.8,485.0 457.2,479.2 473.0,471.0 488.0,460.0 564.8,394.0 589.8,370.5 594.5,364.8 598.8,357.5 600.5,351.8 600.8,345.5 599.5,340.0 597.2,335.2 594.0,330.8 588.0,325.0 575.0,317.0 551.0,307.8 438.5,274.8 365.0,254.5 350.8,251.5 334.0,249.2 306.0,249.2 286.0,252.2 267.2,257.8 252.0,265.0 236.2,275.8 199.2,306.8 137.2,361.2 129.2,369.5 123.5,377.2 121.0,382.8ZM406.0,366.5 384.8,385.0 379.2,383.5 376.2,386.2 370.8,384.8 368.0,387.2 362.5,385.8 359.5,388.5 322.5,378.0 322.2,377.5 325.0,375.0 320.2,373.8 322.8,371.0 317.8,369.2 339.0,350.8 344.5,352.2 347.5,349.5 353.0,351.0 355.8,348.5 361.2,350.0 364.2,347.2 401.2,357.8 401.5,358.2 398.8,360.8 403.5,362.0 401.0,364.8Z"/>
<path fill="#2500fa" fill-rule="evenodd" d="M122.0,389.2 122.8,394.5 125.2,400.5 129.5,406.2 135.2,411.5 143.2,416.8 150.8,420.5 173.0,428.8 290.0,463.0 358.2,481.8 373.8,485.0 388.5,487.0 419.0,487.0 437.0,484.2 454.0,479.2 467.2,473.0 484.2,461.2 521.0,430.2 578.8,379.5 589.2,368.8 594.5,361.8 597.8,354.8 598.8,346.8 597.5,340.5 594.5,334.5 590.8,329.8 585.5,325.0 571.0,316.5 549.0,308.2 449.5,279.0 365.8,255.8 349.0,252.2 336.0,250.5 323.5,249.8 307.2,250.2 286.8,253.2 268.0,258.8 253.2,265.8 236.5,277.2 182.2,323.2 137.8,362.8 130.0,371.0 125.5,377.2 122.8,383.8ZM406.0,366.5 397.0,374.2 395.2,377.0 393.2,377.5 384.8,385.0 379.2,383.5 376.2,386.2 371.8,385.2 367.0,387.2 362.5,385.8 359.5,388.5 344.0,384.0 342.2,384.2 337.2,382.0 322.5,378.0 322.2,377.5 325.0,375.0 320.2,373.8 322.8,371.0 317.8,369.2 326.8,361.5 328.5,358.8 330.5,358.2 339.0,350.8 344.5,352.2 347.5,349.5 352.0,350.5 356.8,348.5 361.2,350.0 364.2,347.2 379.8,351.8 381.5,351.5 386.5,353.8 401.2,357.8 401.5,358.2 398.8,360.8 403.5,362.0 401.0,364.8Z"/>
<path fill="#2e00fe" fill-rule="evenodd" d="M124.2,392.0 125.8,397.2 128.5,402.2 134.0,408.5 139.0,412.5 153.0,420.2 175.5,428.5 271.8,456.8 359.2,481.0 372.2,483.8 388.2,486.0 418.8,486.0 436.5,483.2 452.8,478.5 466.5,472.0 482.8,460.8 559.5,395.0 585.0,371.2 591.0,364.0 594.5,358.0 596.5,351.5 596.5,345.0 594.8,339.0 591.8,333.8 582.0,324.2 568.0,316.5 545.5,308.2 445.8,279.0 366.5,257.0 347.2,253.0 333.0,251.2 305.2,251.5 284.0,255.0 268.0,260.0 252.8,267.5 238.0,277.8 160.8,343.8 133.5,369.2 128.8,375.2 125.8,380.8 124.2,386.0ZM406.0,366.5 397.2,374.2 398.0,374.8 396.0,377.0 394.2,377.2 384.8,385.0 379.0,383.8 376.2,386.2 372.0,385.5 367.0,387.2 362.2,386.0 359.5,388.5 344.0,384.2 341.8,384.5 337.8,383.0 337.8,382.2 322.5,378.0 322.2,377.5 325.0,375.0 320.2,373.8 322.8,371.0 317.8,369.2 326.5,361.5 325.8,361.0 327.8,358.8 329.5,358.5 339.0,350.8 344.8,352.0 347.5,349.5 351.8,350.2 356.8,348.5 361.5,349.8 364.2,347.2 379.8,351.5 382.0,351.2 386.0,352.8 386.0,353.5 401.2,357.8 401.5,358.2 398.8,360.8 403.5,362.0 401.0,364.8Z"/>
<path fill="#3d00fe" fill-rule="evenodd" d="M126.0,390.0 127.5,396.5 129.8,401.0 132.8,405.0 139.2,411.0 153.0,419.0 178.0,428.2 304.0,465.0 360.2,480.2 378.0,483.8 390.8,485.2 418.5,485.0 437.2,482.0 453.5,477.0 468.2,469.5 483.5,458.5 557.8,394.8 583.0,371.2 589.0,364.0 592.8,357.5 594.5,351.5 594.5,345.2 592.8,339.2 589.8,334.0 584.0,327.8 579.5,324.2 563.2,315.8 542.0,308.2 447.2,280.5 365.2,257.8 348.5,254.2 332.8,252.2 305.8,252.5 284.5,256.0 269.2,260.8 255.2,267.5 239.5,278.2 206.0,306.2 145.8,359.0 135.5,369.2 129.8,376.8 126.8,383.5ZM406.0,366.5 398.8,372.8 397.8,374.5 398.5,375.0 396.5,377.2 394.5,377.5 391.8,379.8 390.8,379.8 384.8,385.0 379.8,383.8 376.2,386.2 373.8,385.5 369.0,386.2 368.0,387.2 362.0,386.2 359.5,388.5 349.2,385.5 341.2,384.8 337.8,383.5 335.2,381.5 322.5,378.0 322.2,377.5 325.0,375.0 320.2,373.8 322.8,371.0 317.8,369.2 325.0,363.0 326.0,361.2 325.2,360.8 327.2,358.5 329.2,358.2 332.0,356.0 333.0,356.0 339.0,350.8 344.0,352.0 347.5,349.5 350.0,350.2 354.8,349.5 355.8,348.5 361.8,349.5 364.2,347.2 374.5,350.2 382.5,351.0 386.0,352.2 388.5,354.2 401.2,357.8 401.5,358.2 398.8,360.8 403.5,362.0 401.0,364.8Z"/>
<path fill="#4f00fc" fill-rule="evenodd" d="M128.0,390.8 129.2,396.0 132.5,402.0 142.2,411.5 155.8,419.0 181.2,428.2 312.8,466.5 361.2,479.5 377.8,482.8 390.2,484.2 406.5,484.8 418.8,484.0 437.0,481.0 451.0,476.8 463.8,470.8 479.5,460.0 517.5,428.0 573.8,378.5 583.5,368.5 588.2,362.2 591.8,355.0 592.8,347.5 591.8,342.0 589.2,336.5 586.0,332.0 579.5,326.0 565.5,318.0 543.2,309.8 432.2,277.2 364.0,258.5 335.5,253.5 306.0,253.5 288.2,256.2 271.8,261.0 255.5,268.8 240.0,279.5 211.5,303.2 147.8,359.0 137.2,369.5 131.2,377.5 128.5,384.0ZM406.0,366.5 399.8,372.0 398.2,374.5 399.0,375.2 396.8,377.8 395.2,377.5 392.5,379.8 390.8,379.8 384.8,385.0 379.8,384.0 376.2,386.2 373.8,385.8 368.8,386.5 368.0,387.2 364.2,386.2 361.8,386.5 359.5,388.5 349.2,385.5 347.8,386.0 343.2,384.8 340.8,385.0 337.2,383.8 337.0,382.8 332.8,380.8 322.5,378.0 322.2,377.5 325.0,375.0 320.2,373.8 322.8,371.0 317.8,369.2 324.0,363.8 325.5,361.2 324.8,360.5 327.0,358.0 328.5,358.2 331.2,356.0 333.0,356.0 339.0,350.8 344.0,351.8 347.5,349.5 349.8,350.0 355.0,349.2 355.8,348.5 359.5,349.5 362.0,349.2 364.2,347.2 374.5,350.2 376.0,349.8 380.5,351.0 383.0,350.8 386.5,352.0 386.8,353.0 391.0,355.0 401.2,357.8 401.5,358.2 398.8,360.8 403.5,362.0 401.0,364.8Z"/>
<path fill="#6000fa" fill-rule="evenodd" d="M130.0,391.5 131.5,396.8 134.5,402.0 139.8,407.8 145.2,412.0 160.2,419.8 184.5,428.2 319.8,467.5 360.0,478.2 374.5,481.2 389.5,483.2 408.2,483.8 419.0,483.0 436.8,480.0 453.0,474.8 466.0,468.0 479.0,458.8 553.8,394.8 579.8,370.5 586.0,362.8 589.0,357.2 590.5,352.2 590.8,346.8 590.0,342.8 587.5,337.0 584.2,332.5 576.8,325.8 563.8,318.5 538.2,309.2 446.0,282.2 366.0,260.0 349.8,256.5 335.5,254.5 306.0,254.5 288.5,257.2 268.5,263.5 253.8,271.2 238.2,282.5 172.5,338.8 142.0,366.5 135.5,374.0 131.5,380.8 130.0,386.0ZM406.0,366.5 400.0,371.8 400.5,372.0 398.8,374.8 399.8,375.2 397.2,378.0 395.8,377.8 392.5,380.2 390.8,379.8 384.8,385.0 380.8,384.0 378.0,384.8 376.2,386.2 374.0,386.0 368.0,387.2 365.0,386.5 361.5,386.8 359.5,388.5 349.2,385.5 348.0,386.2 343.0,385.0 341.0,385.5 336.8,384.0 337.0,383.2 332.8,380.8 322.5,378.0 322.2,377.5 325.0,375.0 320.2,373.8 322.8,371.0 317.8,369.2 323.8,364.0 323.2,363.8 325.0,361.0 324.0,360.5 326.5,357.8 328.0,358.0 331.2,355.5 333.0,356.0 339.0,350.8 343.0,351.8 345.8,351.0 347.5,349.5 355.8,348.5 358.8,349.2 362.2,349.0 364.2,347.2 374.5,350.2 375.8,349.5 380.8,350.8 382.8,350.2 387.0,351.8 386.8,352.5 391.0,355.0 401.2,357.8 401.5,358.2 398.8,360.8 403.5,362.0 401.0,364.8Z"/>
<path fill="#7100f7" fill-rule="evenodd" d="M131.8,390.2 133.2,396.2 136.5,402.0 140.2,406.2 145.8,410.8 160.0,418.5 183.8,427.0 285.5,456.8 357.8,476.8 375.5,480.5 388.8,482.2 416.8,482.2 434.5,479.5 450.8,474.5 464.5,467.5 479.5,456.8 555.8,391.2 578.2,370.0 584.2,362.5 587.0,357.5 588.8,351.2 588.8,346.0 587.2,340.5 584.5,335.5 574.8,326.0 562.0,319.0 538.8,310.5 401.2,270.5 362.8,260.2 349.8,257.5 333.0,255.2 319.8,254.8 306.0,255.5 288.8,258.2 272.8,263.0 259.0,269.5 244.5,279.2 212.0,306.2 148.5,362.0 140.2,370.5 134.5,378.5 132.0,385.2ZM406.0,366.5 400.0,371.8 401.0,372.0 399.5,374.8 400.5,375.5 397.8,378.2 396.2,378.0 392.8,380.5 391.0,380.0 384.8,385.0 381.0,384.2 377.2,385.2 376.2,386.2 368.2,387.2 361.2,387.0 359.5,388.5 349.8,385.8 347.0,386.5 342.5,385.2 339.5,385.5 336.2,384.2 336.8,383.5 332.8,381.8 332.8,380.8 322.5,378.0 322.2,377.5 325.0,375.0 320.2,373.8 322.8,371.0 317.8,369.2 323.8,364.0 322.8,363.8 324.2,361.0 323.2,360.2 326.0,357.5 327.5,357.8 331.0,355.2 332.8,355.8 339.0,350.8 342.8,351.5 346.5,350.5 347.5,349.5 355.5,348.5 362.5,348.8 364.2,347.2 374.0,350.0 376.2,349.2 381.2,350.5 383.5,350.0 387.5,351.5 387.0,352.2 391.0,354.0 391.0,355.0 401.2,357.8 401.5,358.2 398.8,360.8 403.5,362.0 401.0,364.8Z"/>
<path fill="#7f05f1" fill-rule="evenodd" d="M133.8,391.5 135.0,396.0 137.8,401.0 147.2,410.2 161.0,417.8 183.8,426.0 317.8,465.0 360.8,476.5 373.8,479.2 390.5,481.5 403.8,482.0 417.5,481.2 435.5,478.2 451.5,473.0 463.0,467.0 476.5,457.5 507.5,431.5 566.2,380.0 577.0,369.2 583.0,361.5 586.5,353.5 587.0,347.2 585.5,341.0 582.2,335.2 577.5,330.0 572.8,326.2 559.8,319.2 537.8,311.2 440.5,282.8 363.8,261.5 349.8,258.5 333.5,256.2 317.5,255.8 305.8,256.5 290.0,259.0 269.5,265.5 256.8,272.2 243.0,282.0 178.8,336.8 155.0,357.8 143.8,368.8 138.8,374.8 135.2,380.8 133.8,385.8ZM406.0,366.5 400.0,371.8 401.8,372.2 400.0,375.0 401.0,376.0 398.5,378.5 397.0,378.0 393.8,380.5 391.5,380.0 384.8,385.0 381.0,384.5 377.0,385.5 376.0,386.5 368.8,387.5 360.8,387.2 359.5,388.5 349.8,386.0 346.5,386.8 341.8,385.5 340.5,386.2 336.0,384.8 336.2,383.8 331.8,381.5 332.8,380.8 322.5,378.0 322.2,377.5 325.0,375.0 320.2,373.8 322.8,371.0 317.8,369.2 323.8,364.0 322.0,363.5 323.8,360.8 322.8,359.8 325.2,357.2 326.8,357.8 330.0,355.2 332.2,355.8 339.0,350.8 342.8,351.2 346.8,350.2 347.8,349.2 355.0,348.2 363.0,348.5 364.2,347.2 372.5,349.5 375.5,349.8 377.2,349.0 381.8,350.2 383.2,349.5 387.8,351.0 387.5,352.0 392.0,354.2 391.0,355.0 401.2,357.8 401.5,358.2 398.8,360.8 403.5,362.0 401.0,364.8Z"/>
<path fill="#8c09ea" fill-rule="evenodd" d="M135.5,391.0 137.0,396.2 139.5,400.8 148.8,409.8 164.2,418.0 188.5,426.5 318.5,464.2 360.5,475.5 379.2,479.2 392.5,480.8 407.8,481.0 418.2,480.2 438.2,476.5 451.0,472.0 462.8,465.8 480.8,452.5 549.0,393.8 573.2,371.2 579.8,363.5 583.2,357.5 585.0,351.5 585.0,346.0 583.2,340.2 580.2,335.2 571.5,327.0 557.5,319.5 536.8,312.0 421.2,278.2 364.8,262.8 347.0,259.0 333.8,257.2 315.8,256.8 305.5,257.5 289.0,260.2 271.8,265.8 259.0,272.2 243.8,283.0 212.8,309.0 154.2,360.2 144.8,369.8 138.5,378.0 136.0,383.8ZM406.0,366.5 400.2,371.5 402.2,372.5 400.8,375.2 401.8,376.2 399.0,378.8 397.5,378.2 394.2,380.8 391.8,380.2 387.5,382.5 384.8,385.0 382.0,384.5 375.0,387.0 369.5,387.8 360.5,387.5 359.5,388.5 349.5,386.2 345.8,387.0 341.5,385.8 339.8,386.5 335.2,384.8 335.8,384.0 331.5,382.0 332.5,380.8 322.5,378.0 322.2,377.5 325.0,375.0 320.2,373.8 322.8,371.0 317.8,369.2 323.5,364.2 321.5,363.2 323.0,360.5 322.0,359.5 324.8,357.0 326.2,357.5 329.5,355.0 332.0,355.5 336.2,353.2 339.0,350.8 341.5,351.2 348.8,348.8 354.2,348.0 363.2,348.2 364.2,347.2 374.2,349.5 378.0,348.8 382.2,350.0 384.0,349.2 388.5,351.0 388.0,351.8 392.2,353.8 391.2,355.0 401.2,357.8 401.5,358.2 398.8,360.8 403.5,362.0 401.0,364.8Z"/>
<path fill="#990ee3" fill-rule="evenodd" d="M137.2,390.5 138.5,395.5 141.2,400.5 150.2,409.2 165.8,417.5 189.2,425.8 322.8,464.5 361.2,474.8 375.8,477.8 391.2,479.8 416.5,479.5 432.2,477.0 448.2,472.0 461.8,465.0 475.0,455.5 550.8,390.5 572.8,369.8 578.2,363.0 581.8,356.8 583.2,351.0 583.2,346.8 582.0,341.8 579.0,336.2 570.2,327.8 557.0,320.5 535.8,312.8 430.8,282.0 364.8,263.8 345.8,259.8 334.2,258.2 307.5,258.2 291.2,260.8 275.2,265.5 261.8,272.0 246.8,282.2 202.2,319.8 153.0,363.2 145.8,370.8 140.5,377.8 137.8,384.0ZM406.0,366.5 400.8,371.5 403.0,372.8 401.2,375.5 402.2,376.0 394.8,381.0 392.5,380.2 387.5,382.5 384.8,385.0 382.2,384.8 374.0,387.5 360.2,387.8 359.5,388.5 354.5,387.0 347.8,386.2 346.2,387.5 335.5,385.2 335.2,384.2 331.0,382.2 332.2,381.2 331.0,380.2 322.5,378.0 322.2,377.5 325.0,375.0 320.2,373.8 322.8,371.0 317.8,369.2 323.0,364.2 320.8,363.0 322.5,360.2 321.5,359.8 329.0,354.8 331.2,355.5 336.2,353.2 339.0,350.8 341.5,351.0 349.8,348.2 363.5,348.0 364.2,347.2 369.2,348.8 376.0,349.5 377.5,348.2 388.2,350.5 388.5,351.5 392.8,353.5 391.5,354.5 392.8,355.5 401.2,357.8 401.5,358.2 398.8,360.8 403.5,362.0 401.0,364.8Z"/>
<path fill="#a515dc" fill-rule="evenodd" d="M139.0,390.2 140.8,396.5 143.5,401.0 152.8,409.5 167.2,417.0 190.0,425.0 313.8,461.0 361.0,473.8 387.2,478.5 398.0,479.2 415.0,478.8 431.2,476.2 448.5,470.8 459.5,465.0 473.0,455.5 528.5,408.2 566.5,374.2 573.5,366.8 579.0,358.8 581.0,353.5 581.5,347.5 580.5,342.8 577.8,337.2 575.0,333.8 569.0,328.5 556.5,321.5 533.2,313.0 418.5,279.5 363.8,264.5 348.8,261.2 335.0,259.2 306.8,259.2 291.2,261.8 273.8,267.2 260.2,274.2 246.5,284.0 217.5,308.2 156.8,361.5 148.8,369.5 142.5,377.5 139.5,384.2ZM406.0,366.5 401.8,370.2 401.2,372.0 403.8,373.0 402.2,376.0 395.8,381.0 392.8,380.5 388.8,382.8 387.5,382.5 384.8,385.0 376.2,386.2 374.5,387.8 371.0,388.2 367.8,387.5 359.0,388.5 354.5,387.0 352.8,387.5 347.5,386.5 345.5,387.8 335.5,385.2 331.0,383.0 332.0,381.2 330.2,380.2 322.5,378.0 322.2,377.5 324.8,375.2 320.0,373.5 322.5,371.0 317.8,369.2 322.0,365.5 322.5,363.8 320.0,362.8 321.5,359.8 328.0,354.8 331.0,355.2 335.0,353.0 336.2,353.2 339.0,350.8 347.5,349.5 349.2,348.0 352.8,347.5 356.0,348.2 364.8,347.2 369.2,348.8 371.0,348.2 376.2,349.2 378.2,348.0 388.2,350.5 392.8,352.8 392.0,354.5 393.5,355.5 401.2,357.8 401.5,358.2 399.0,360.5 403.8,362.2 401.2,364.8Z"/>
<path fill="#af1fd4" fill-rule="evenodd" d="M140.8,390.0 143.5,398.2 146.0,401.8 152.8,408.0 167.5,416.0 190.8,424.2 323.2,462.8 361.8,473.0 377.5,476.2 391.5,478.0 416.0,477.8 430.2,475.5 445.8,470.8 458.5,464.2 472.2,454.5 503.5,428.2 561.5,377.2 568.8,370.0 575.2,362.0 578.5,355.8 579.8,348.5 578.8,343.0 576.8,338.8 574.5,335.5 566.8,328.5 552.5,321.0 531.5,313.5 433.2,284.8 362.8,265.2 347.5,262.0 333.0,260.0 308.8,260.0 293.5,262.2 277.2,267.0 263.8,273.5 249.5,283.2 214.5,312.5 155.2,364.8 148.0,372.5 144.0,378.0 141.5,383.5ZM317.8,369.2 321.2,366.2 322.0,363.8 319.5,363.0 319.8,361.5 327.5,354.5 330.5,355.0 334.5,352.8 336.5,353.0 339.0,350.8 346.0,349.0 347.5,349.5 349.5,347.8 351.8,347.2 355.2,348.2 357.0,347.5 364.8,347.2 368.5,348.5 371.5,348.0 376.5,349.0 378.8,347.8 391.5,351.5 393.5,352.8 392.2,354.0 395.5,356.2 401.5,358.0 399.5,360.5 403.8,362.2 401.8,364.0 402.0,365.2 406.0,366.5 402.5,369.5 401.8,372.0 404.2,372.8 404.0,374.2 396.2,381.2 393.2,380.8 389.2,383.0 387.2,382.8 384.8,385.0 377.8,386.8 376.2,386.2 374.2,388.0 371.8,388.5 368.5,387.5 366.8,388.2 359.0,388.5 355.2,387.2 352.2,387.8 347.2,386.8 345.0,388.0 333.0,384.5 330.2,383.0 331.5,381.5 328.8,379.8 322.5,378.0 324.2,375.2 320.0,373.5 322.0,371.8 321.8,370.5Z"/>
<path fill="#ba2acd" fill-rule="evenodd" d="M142.5,390.0 143.5,394.5 146.5,400.0 150.2,404.2 155.2,408.2 169.0,415.5 192.2,423.8 319.5,460.8 363.5,472.5 390.0,477.0 406.8,477.5 417.0,476.8 433.5,473.8 448.2,468.5 461.8,460.8 476.2,449.8 547.2,388.5 568.2,368.5 573.2,362.2 576.5,356.2 577.8,351.8 577.8,346.2 576.8,342.5 574.2,337.8 568.5,331.5 564.5,328.5 551.5,321.8 529.0,313.8 398.2,275.8 361.8,266.0 333.8,261.0 307.8,261.0 292.2,263.5 275.8,268.8 263.5,275.0 248.2,285.8 217.0,312.0 160.0,362.0 150.2,372.0 145.5,378.5 143.2,383.5ZM317.8,369.2 320.5,366.8 321.0,363.2 318.5,362.5 327.5,354.5 329.8,355.0 333.8,352.8 336.2,352.8 341.5,349.8 344.5,349.0 347.5,349.5 351.0,347.0 355.2,348.2 357.2,347.2 364.8,347.2 367.5,348.2 372.0,347.8 375.5,348.5 378.8,347.8 394.0,352.5 392.5,353.8 396.2,356.5 401.5,358.0 399.8,360.0 400.8,361.2 403.8,362.2 402.2,363.8 402.5,365.0 406.0,366.5 403.2,369.0 402.8,372.5 405.2,373.2 396.2,381.2 394.0,380.8 390.0,383.0 387.5,383.0 382.2,386.0 379.2,386.8 376.2,386.2 372.8,388.8 368.5,387.5 366.5,388.5 359.0,388.5 353.8,387.2 353.0,388.0 348.2,387.2 345.0,388.0 329.8,383.2 331.2,381.8 327.5,379.2 322.2,377.8 324.0,375.8 323.0,374.5 320.0,373.5 321.5,372.0 321.2,370.8Z"/>
<path fill="#c332c6" fill-rule="evenodd" d="M144.2,390.0 147.0,398.0 149.8,401.8 155.2,406.8 169.2,414.5 193.8,423.2 308.8,456.8 360.0,470.8 375.0,474.0 388.8,476.0 415.8,476.0 433.5,472.8 446.2,468.2 457.8,462.0 472.8,451.0 540.2,393.0 565.2,369.8 571.2,362.5 574.5,356.8 576.0,351.8 576.0,346.5 574.5,341.5 571.0,336.0 565.8,331.0 561.0,327.8 544.2,320.0 525.8,313.8 398.2,276.8 359.8,266.5 343.8,263.2 331.8,261.8 307.0,262.0 288.2,265.5 275.5,270.0 262.5,277.0 246.8,288.5 186.0,340.5 158.8,365.0 151.2,373.0 146.8,379.5 144.5,385.5ZM317.8,369.2 320.5,366.8 320.0,365.2 320.8,363.2 318.5,362.5 327.5,354.5 329.2,354.8 333.2,352.5 335.5,352.8 341.0,349.5 344.0,348.8 347.8,349.2 350.8,346.8 355.2,348.2 359.5,346.8 370.2,348.2 371.0,347.5 376.0,348.2 378.8,347.8 394.0,352.5 392.8,353.5 396.8,356.2 396.2,356.5 401.5,358.0 400.0,359.5 401.5,361.5 403.8,362.2 402.8,363.2 403.2,365.5 406.0,366.5 403.2,369.0 403.8,370.5 403.0,372.5 405.2,373.2 396.2,381.2 394.5,381.0 390.5,383.2 388.2,383.0 381.8,386.5 376.0,386.5 373.0,389.0 368.5,387.5 364.0,389.0 353.5,387.5 352.8,388.2 347.8,387.5 345.0,388.0 329.8,383.2 331.0,382.2 327.0,379.5 327.5,379.2 322.2,377.8 323.8,376.2 322.2,374.2 320.0,373.5 321.0,372.5 320.5,370.2Z"/>
<path fill="#cc36c2" fill-rule="evenodd" d="M146.0,390.0 147.2,395.0 150.0,399.8 154.5,404.5 160.0,408.5 171.2,414.2 196.0,423.0 327.0,461.0 362.8,470.5 390.0,475.2 414.5,475.2 429.8,472.8 444.8,467.8 456.8,461.2 474.5,448.0 541.8,390.0 565.0,368.0 569.2,362.8 572.8,356.8 574.2,351.5 574.2,346.8 573.0,342.2 570.2,337.5 565.8,332.8 560.2,328.8 545.2,321.5 523.2,314.0 396.5,277.2 358.8,267.2 332.8,262.8 316.2,262.2 306.2,263.0 289.2,266.2 277.0,270.5 264.2,277.2 251.2,286.5 225.8,307.8 163.5,362.2 155.5,370.2 149.2,378.2 146.5,384.5ZM317.8,369.2 320.5,366.8 319.2,366.2 320.2,363.0 318.5,362.5 327.5,354.5 329.0,354.5 333.0,352.2 335.2,352.5 341.5,349.0 347.8,349.0 350.8,346.8 355.2,348.0 358.0,346.5 362.0,346.5 367.8,347.8 378.8,347.8 394.0,352.5 393.0,353.2 397.0,356.0 396.2,356.5 401.5,358.0 400.5,359.2 403.8,362.2 403.0,363.0 404.0,365.8 406.0,366.5 403.2,369.0 404.5,369.5 403.5,372.8 405.2,373.2 396.2,381.2 394.8,381.2 390.8,383.5 389.2,383.0 385.2,384.5 382.2,386.8 376.0,386.8 373.0,389.0 368.2,387.8 365.8,389.2 353.2,387.8 352.5,388.5 345.0,388.0 329.8,383.2 330.8,382.5 326.8,379.8 327.5,379.2 322.2,377.8 323.2,376.5 320.0,373.5 320.8,372.8 319.8,370.0Z"/>
<path fill="#d63bbd" fill-rule="evenodd" d="M147.8,390.2 149.0,395.0 152.2,400.2 156.5,404.5 161.8,408.2 177.0,415.5 197.5,422.5 326.8,460.0 363.5,469.8 378.0,472.8 391.2,474.5 415.8,474.2 432.8,471.0 445.5,466.2 459.5,458.0 472.2,448.2 541.0,389.0 562.0,369.2 567.2,363.0 570.5,357.8 572.5,351.5 572.5,346.8 571.5,343.0 568.5,337.8 564.2,333.2 558.8,329.2 546.8,323.2 524.8,315.5 394.8,277.8 360.0,268.5 333.5,263.8 307.8,263.8 293.0,266.2 278.5,271.0 265.2,278.0 251.0,288.2 202.5,329.5 163.0,364.5 156.0,371.8 150.8,378.8 148.2,384.5ZM317.8,369.2 320.5,366.8 318.5,366.0 319.5,363.2 318.5,362.5 327.5,354.5 332.0,352.2 334.2,352.5 338.8,350.8 342.0,348.5 346.2,349.0 348.8,348.5 350.8,346.8 355.0,347.8 357.0,347.5 358.2,346.2 361.2,346.2 364.0,347.2 371.0,347.5 372.0,346.8 378.8,347.8 393.5,352.0 393.5,353.0 397.5,355.5 396.5,356.5 401.5,358.0 400.8,358.8 403.8,362.2 404.8,366.0 406.0,366.5 403.2,369.0 405.2,369.8 404.2,372.5 405.2,373.2 396.2,381.2 391.8,383.5 389.5,383.2 385.0,385.0 381.8,387.2 377.5,386.8 375.0,387.2 373.0,389.0 368.5,388.0 366.8,388.2 365.5,389.5 362.5,389.5 359.8,388.5 352.8,388.2 351.8,389.0 345.0,388.0 330.2,383.8 330.2,382.8 326.2,380.2 327.2,379.2 322.2,377.8 323.0,377.0 320.0,373.5 319.0,369.8Z"/>
<path fill="#df3fb9" fill-rule="evenodd" d="M149.5,390.5 150.8,395.0 153.5,399.5 156.8,403.0 162.8,407.5 177.8,414.8 199.8,422.2 326.5,459.0 362.0,468.5 378.8,472.0 390.0,473.5 414.5,473.5 430.0,470.8 443.5,466.0 453.2,460.8 471.2,447.5 540.2,388.0 558.5,371.0 567.8,359.5 570.5,352.8 570.8,347.0 569.2,342.0 566.8,338.0 562.8,333.8 557.2,329.8 542.0,322.5 521.5,315.5 393.0,278.2 358.0,269.0 331.8,264.5 309.2,264.5 294.0,267.0 280.0,271.5 267.0,278.2 252.0,289.0 167.5,362.0 158.5,371.0 153.0,378.0 150.0,384.5ZM318.5,362.5 329.0,353.2 331.5,352.0 333.5,352.5 339.2,350.5 342.2,348.0 346.0,348.8 348.8,348.2 350.8,346.8 352.5,347.5 357.2,347.2 359.5,345.8 364.0,347.2 374.8,346.8 393.5,352.0 397.8,355.0 397.0,356.0 397.5,356.8 401.5,358.0 406.0,366.5 403.8,369.2 405.8,370.0 405.2,373.2 394.8,382.5 392.2,383.8 390.2,383.2 384.5,385.2 381.5,387.8 377.8,387.0 375.0,387.5 373.0,389.0 371.2,388.2 366.5,388.5 364.2,390.0 359.8,388.5 349.0,389.0 330.2,383.8 326.0,380.8 326.8,379.8 326.2,379.0 322.2,377.8 317.8,369.2 320.0,366.5 318.2,366.0Z"/>
<path fill="#e844b2" fill-rule="evenodd" d="M151.2,390.5 152.8,395.5 154.8,398.8 159.0,403.2 163.8,406.8 175.5,412.8 197.2,420.5 328.0,458.5 363.8,468.0 391.0,472.8 413.2,472.8 426.0,470.8 441.5,465.8 452.2,460.0 470.2,446.8 537.5,388.8 559.2,368.2 564.0,362.5 567.5,356.5 569.0,351.2 569.0,347.0 567.8,342.8 565.2,338.5 561.5,334.5 556.5,330.8 544.8,324.8 523.0,317.0 421.0,287.2 360.2,270.5 332.5,265.5 308.5,265.5 292.0,268.5 279.8,272.8 266.0,280.2 253.0,289.8 198.5,336.2 167.2,364.0 159.0,372.5 154.0,379.2 151.5,385.5ZM317.2,364.8 320.0,361.0 330.8,351.8 333.0,352.2 340.0,350.0 342.2,348.0 345.8,348.5 349.5,347.8 350.8,346.8 357.5,347.0 359.0,345.8 363.2,347.0 371.8,347.0 373.5,346.2 393.5,352.0 398.2,354.8 397.2,356.0 401.8,358.0 404.2,361.0 404.0,362.2 405.2,362.8 406.2,366.2 404.5,367.8 404.5,369.5 406.0,369.8 406.5,371.0 403.8,374.8 393.0,384.0 390.8,383.5 386.0,385.5 384.2,385.5 381.5,387.8 378.0,387.2 374.2,388.0 373.0,389.0 366.2,388.8 364.8,390.0 360.5,388.8 352.0,388.8 350.2,389.5 330.2,383.8 325.5,381.0 326.5,379.8 325.0,378.5 322.0,377.8 319.5,374.8 319.8,373.5 318.5,372.8 317.5,370.0 319.2,368.0 319.2,366.2 317.8,366.0Z"/>
<path fill="#f249aa" fill-rule="evenodd" d="M153.0,390.8 154.0,394.2 157.0,399.2 161.0,403.2 166.8,407.2 181.2,414.0 203.5,421.5 327.8,457.5 360.2,466.2 377.5,470.0 389.8,471.8 414.5,471.8 429.2,469.0 442.8,464.0 454.8,457.0 468.0,447.0 536.8,387.8 556.0,369.8 564.8,358.5 567.0,352.8 567.2,347.2 566.2,343.5 563.5,338.8 555.0,331.2 542.0,324.8 519.8,317.0 389.5,279.2 358.2,271.0 330.8,266.2 307.5,266.5 292.0,269.5 279.0,274.2 267.8,280.5 251.5,292.5 171.5,361.8 161.5,371.8 156.2,378.5 153.5,384.5ZM316.5,364.5 330.8,351.8 332.8,352.0 337.2,350.0 340.0,349.8 342.2,348.0 344.2,348.5 350.8,346.8 357.0,346.8 359.0,345.8 365.0,346.8 373.5,346.2 398.5,354.0 397.5,355.5 399.5,357.2 402.8,358.2 405.0,361.0 404.0,362.2 406.2,363.2 407.0,365.8 405.2,367.2 405.0,369.5 406.8,370.0 407.2,371.2 393.0,384.0 391.0,383.8 386.5,385.8 383.8,386.0 381.5,387.8 379.5,387.2 373.0,389.0 366.8,389.0 364.8,390.0 359.2,389.0 350.2,389.5 325.8,382.0 325.0,381.2 326.2,380.2 324.0,378.2 321.0,377.5 318.8,374.8 319.8,373.5 317.8,372.8 316.8,370.0 318.5,368.5 318.8,366.2 317.0,365.8Z"/>
<path fill="#fc4ea3" fill-rule="evenodd" d="M154.8,390.8 155.8,394.2 158.2,398.5 163.0,403.2 167.8,406.5 180.8,412.8 201.8,420.0 327.5,456.5 363.0,466.0 378.2,469.2 391.0,471.0 413.2,471.0 429.2,468.0 440.8,463.8 450.8,458.2 467.0,446.2 536.0,386.8 556.2,367.5 563.5,357.5 565.2,352.5 565.5,347.5 564.2,343.0 562.0,339.2 554.2,332.2 541.0,325.5 521.2,318.5 402.8,284.0 360.5,272.5 345.5,269.2 331.8,267.2 309.2,267.2 298.0,269.0 284.0,273.2 269.5,280.8 257.2,289.5 231.5,311.0 171.5,363.5 162.0,373.2 157.8,379.0 155.0,385.2ZM315.5,365.0 330.8,351.8 340.5,349.2 342.2,348.0 359.0,345.8 373.5,346.2 399.2,354.0 398.0,355.2 401.0,357.8 403.8,358.5 405.5,360.5 404.0,362.2 406.8,363.0 407.5,364.5 405.8,366.8 405.8,369.8 408.2,370.8 393.0,384.0 383.2,386.5 381.5,387.8 364.8,390.0 350.2,389.5 324.5,381.8 326.0,380.5 323.0,378.0 320.0,377.2 318.2,375.2 319.8,373.5 317.0,372.8 316.2,371.2 318.0,369.0 318.0,366.0Z"/>
<path fill="#ff579a" fill-rule="evenodd" d="M156.5,390.8 157.5,394.2 160.8,399.2 170.0,406.5 183.5,412.8 207.2,420.8 327.2,455.5 365.8,465.8 392.2,470.2 414.2,470.0 427.5,467.5 438.8,463.5 449.8,457.5 464.8,446.5 547.0,375.0 555.5,366.2 560.2,360.0 563.2,353.5 563.8,347.8 562.5,343.2 560.2,339.5 555.5,334.8 550.8,331.5 536.2,324.8 518.0,318.5 395.8,283.0 358.5,273.0 332.5,268.2 308.5,268.2 295.8,270.5 282.0,275.2 270.5,281.5 252.0,295.2 193.2,345.8 170.5,366.2 163.0,374.2 159.2,379.5 156.5,386.5ZM315.5,365.0 324.5,356.2 330.8,351.8 335.0,350.0 352.5,346.2 369.2,345.8 385.0,349.0 391.0,351.5 399.2,354.0 398.5,355.0 401.8,358.0 405.2,359.0 406.2,360.2 404.2,362.2 408.0,363.5 408.2,364.5 406.2,366.2 406.2,370.0 408.2,370.8 399.2,379.5 393.0,384.0 388.8,385.8 371.0,389.5 354.5,390.0 339.8,387.0 324.5,381.8 325.5,380.8 322.0,377.8 318.5,376.8 317.5,375.5 319.5,373.5 315.8,372.2 315.5,371.2 317.5,369.5 317.5,365.8Z"/>
<path fill="#ff6291" fill-rule="evenodd" d="M158.2,390.8 159.0,393.5 162.0,398.5 169.8,405.0 183.0,411.5 205.5,419.2 335.0,456.8 362.2,464.0 388.5,469.0 398.5,469.8 413.0,469.2 427.5,466.5 437.2,463.0 448.0,457.2 466.5,443.5 543.0,377.0 553.0,367.0 558.8,359.5 561.2,354.2 562.0,348.0 561.0,344.0 558.5,339.8 550.0,332.5 535.2,325.5 515.5,318.8 386.0,281.2 356.5,273.5 330.5,269.0 310.0,269.0 295.8,271.5 283.5,275.8 271.5,282.2 254.2,295.0 175.2,363.5 167.2,371.5 161.5,378.8 158.8,384.5ZM409.0,363.8 406.2,366.2 407.2,366.8 407.0,370.2 408.2,370.8 404.8,373.8 401.0,378.8 397.2,381.5 388.5,386.2 369.5,390.0 353.2,390.2 339.2,387.2 325.0,382.2 325.0,381.2 321.5,378.2 322.0,377.8 317.0,376.0 319.0,374.2 318.8,373.2 314.8,372.0 317.5,369.5 316.5,369.0 316.8,365.5 315.5,365.0 319.0,362.0 322.8,357.0 326.5,354.2 335.2,349.5 354.2,345.8 370.5,345.5 385.5,348.8 393.0,352.0 398.8,353.5 398.8,354.5 402.2,357.5 401.8,358.0 406.8,359.8 404.8,361.5 405.0,362.5Z"/>
<path fill="#ff6e88" fill-rule="evenodd" d="M160.0,390.5 161.0,394.0 163.5,398.0 172.0,405.0 185.8,411.5 207.0,418.8 333.0,455.2 364.0,463.5 389.8,468.2 411.5,468.5 426.5,465.8 438.5,461.2 451.5,453.5 464.2,443.8 543.5,374.8 552.0,366.0 557.2,359.0 559.8,353.2 560.2,348.8 559.5,345.0 557.2,340.8 549.2,333.5 538.0,327.8 513.0,319.0 359.8,275.2 346.2,272.2 331.2,270.0 309.5,270.0 295.0,272.8 284.5,276.5 272.5,283.0 255.0,296.0 174.5,366.0 166.2,374.8 162.2,380.5 160.2,385.5ZM409.0,363.8 406.8,366.0 408.0,367.0 408.2,370.8 405.8,373.0 403.5,377.0 399.2,380.8 389.0,386.5 370.5,390.2 354.8,390.8 337.0,387.0 329.0,383.2 325.0,382.2 321.2,378.8 321.0,377.5 317.0,376.0 318.8,374.5 318.0,373.2 314.8,372.0 317.0,369.8 315.8,368.8 315.5,365.0 318.0,362.8 320.2,358.8 324.5,355.0 334.5,349.2 336.0,349.5 344.8,346.8 353.0,345.5 369.0,345.0 386.0,348.5 394.8,352.5 398.8,353.5 402.5,357.0 402.8,358.2 406.8,359.8 405.2,361.0 405.8,362.5Z"/>
<path fill="#ff787f" fill-rule="evenodd" d="M161.8,390.2 162.8,393.8 165.2,397.8 172.2,403.8 183.5,409.5 207.8,418.0 337.2,455.5 364.8,462.8 391.2,467.5 412.2,467.5 425.5,465.0 437.5,460.5 450.5,452.8 463.5,442.8 531.8,383.8 549.2,367.0 556.8,356.5 558.2,351.8 558.2,347.2 557.2,344.0 554.5,339.8 550.5,336.0 544.8,332.2 530.0,325.8 508.0,318.5 358.8,276.0 331.8,271.0 309.0,271.0 296.0,273.5 285.5,277.2 273.5,283.8 257.2,295.8 178.5,364.0 170.8,371.8 164.5,379.8 162.2,384.8ZM409.0,363.8 407.5,365.2 407.5,366.5 408.8,367.2 408.5,370.5 407.0,371.8 404.5,376.8 399.8,381.0 389.8,386.8 388.2,386.5 379.5,389.2 369.2,390.8 355.5,391.0 343.0,389.0 335.0,386.8 323.5,381.5 320.5,379.0 321.2,378.5 319.8,377.0 317.0,376.0 318.2,375.0 317.0,372.8 314.8,372.0 316.2,370.5 316.2,369.2 315.0,368.5 315.2,365.2 316.8,364.0 319.2,359.0 325.0,354.0 334.0,349.0 335.2,349.2 345.2,346.2 354.5,345.0 367.5,344.5 370.2,345.5 380.8,346.8 389.5,349.2 400.0,354.0 403.2,356.8 402.5,357.2 404.0,358.8 406.8,359.8 405.5,360.8 406.8,363.0Z"/>
<path fill="#ff7f77" fill-rule="evenodd" d="M163.5,389.5 164.5,393.5 167.0,397.5 175.8,404.5 190.0,411.0 212.5,418.5 331.8,453.0 365.5,462.0 390.2,466.5 413.0,466.5 426.2,463.8 436.5,459.8 448.8,452.5 462.8,441.8 541.2,373.2 548.2,366.0 553.2,359.5 556.0,353.5 556.5,348.0 555.8,345.0 553.2,340.8 549.5,337.0 544.0,333.2 532.2,327.8 509.5,320.0 357.8,276.8 332.2,272.0 311.0,271.8 296.2,274.5 286.5,278.0 275.8,283.8 261.8,293.8 197.5,348.8 176.0,368.2 166.5,379.5 164.0,385.0ZM314.0,367.2 317.2,360.8 320.5,356.8 324.5,353.8 334.0,349.0 344.5,346.0 353.0,344.8 367.5,344.5 386.5,347.8 401.2,354.2 403.5,356.2 403.0,357.0 406.8,359.8 406.2,360.5 407.5,363.0 409.0,363.8 408.0,365.0 408.5,367.0 409.8,367.5 409.8,368.8 408.0,371.0 406.5,375.0 403.2,379.0 399.2,382.0 389.8,386.8 379.2,389.8 370.8,391.0 356.2,391.2 338.2,388.2 322.5,381.5 320.2,379.5 320.8,378.8 319.0,376.8 317.0,376.0 317.5,375.0 316.2,372.8 314.8,372.0 315.8,370.5Z"/>
<path fill="#ff866e" fill-rule="evenodd" d="M165.5,390.8 168.8,397.2 177.2,404.0 190.2,410.0 215.8,418.5 330.8,451.8 365.2,461.0 389.5,465.5 411.2,465.8 426.0,462.8 439.8,456.8 450.5,449.8 463.5,439.5 527.0,384.5 545.0,367.5 550.0,361.5 553.2,356.0 554.5,352.0 554.5,347.5 551.0,340.5 547.2,337.0 541.0,333.0 527.2,327.0 505.2,319.8 358.8,278.0 345.2,275.0 330.0,272.8 308.5,273.0 296.5,275.5 281.5,281.8 269.8,289.2 255.8,300.2 194.0,353.5 175.0,371.2 169.8,377.5 166.8,382.5 165.5,386.5ZM313.2,367.0 315.0,365.5 316.2,361.0 320.5,356.0 327.0,351.8 332.0,349.5 345.0,345.5 354.0,344.2 366.5,344.2 375.2,345.0 387.2,347.5 395.2,350.8 400.0,354.0 403.0,354.8 404.0,355.8 403.5,356.5 406.8,359.8 409.0,363.8 409.2,367.2 410.5,367.8 410.5,368.8 408.8,370.2 407.5,374.8 403.2,379.8 396.8,384.0 391.8,386.2 378.8,390.2 369.5,391.5 357.2,391.5 347.0,390.5 337.5,388.5 330.8,386.0 324.2,382.0 320.5,380.8 319.8,380.0 320.2,379.2 317.0,376.0 314.8,372.0 314.5,368.5 313.2,368.0Z"/>
<path fill="#ff8c65" fill-rule="evenodd" d="M167.2,389.8 168.0,392.8 171.2,397.8 179.2,403.8 192.5,409.8 213.2,416.8 363.0,459.5 379.0,463.0 391.2,464.8 411.5,464.8 422.2,462.8 432.8,459.0 444.0,452.8 458.8,441.8 535.2,375.2 543.8,366.8 549.8,359.0 552.2,353.5 552.8,348.8 552.0,345.5 549.5,341.2 542.8,335.5 527.5,328.2 508.2,321.8 383.0,285.5 354.5,278.0 330.2,273.8 310.8,273.8 297.8,276.2 287.0,280.2 277.5,285.5 261.8,297.0 183.5,364.8 170.8,378.8 167.5,385.8ZM312.2,367.8 314.0,366.2 315.2,361.2 317.0,358.5 322.8,353.5 327.8,350.8 335.8,347.5 345.2,345.2 364.8,343.8 382.2,345.8 390.2,348.0 395.8,350.5 401.2,354.2 404.5,355.5 404.0,356.2 407.5,359.8 409.2,362.8 410.0,367.5 411.5,368.0 409.8,369.5 408.5,374.5 406.8,377.2 401.0,382.2 395.2,385.2 386.2,388.8 378.5,390.5 359.0,392.0 342.8,390.2 333.0,387.5 328.0,385.2 322.2,381.2 319.2,380.2 319.8,379.5 314.8,373.5 313.8,368.2Z"/>
<path fill="#ff935d" fill-rule="evenodd" d="M169.2,390.2 172.2,396.5 176.2,400.2 181.8,403.8 194.8,409.5 215.8,416.5 341.2,452.8 366.0,459.2 390.8,463.8 409.2,464.0 421.0,462.0 432.8,457.8 444.8,450.8 457.0,441.5 533.2,375.2 542.0,366.5 547.5,359.5 550.2,353.8 550.8,348.2 547.8,341.8 544.5,338.5 538.5,334.5 523.0,327.8 501.5,320.8 357.5,279.8 330.2,274.8 311.0,274.8 299.0,277.0 289.2,280.5 279.0,286.0 263.5,297.2 185.8,364.5 177.5,372.8 171.8,380.2 169.8,384.5ZM312.2,367.8 313.2,367.0 313.8,363.0 316.2,358.2 322.0,353.2 327.8,350.2 337.5,346.5 343.2,345.2 363.0,343.2 382.2,345.2 396.0,350.0 404.2,355.2 410.0,362.5 409.8,363.8 411.5,368.0 410.5,368.8 410.2,372.2 407.5,377.5 401.8,382.5 396.5,385.2 387.0,389.0 372.5,391.8 360.8,392.5 342.8,390.8 332.8,388.0 327.8,385.8 319.5,380.5 315.0,375.5Z"/>
<path fill="#ff9b55" fill-rule="evenodd" d="M171.2,390.2 174.0,396.0 177.2,399.2 182.5,402.8 197.8,409.5 220.8,417.0 339.5,451.2 367.0,458.5 390.2,462.8 409.2,463.0 421.5,460.8 431.0,457.2 445.8,448.5 456.8,440.0 531.5,375.0 540.0,366.5 546.0,358.8 548.5,353.0 548.8,348.5 545.8,342.0 541.8,338.2 536.2,334.8 521.8,328.5 502.0,322.0 356.2,280.5 332.5,276.0 311.2,275.8 300.5,277.8 290.5,281.2 279.0,287.5 263.8,298.8 187.5,364.8 179.5,372.8 174.0,379.8 171.5,385.2ZM312.0,368.0 313.8,360.5 319.8,354.5 325.2,350.8 340.0,345.5 358.2,343.0 377.8,344.0 396.0,349.2 405.2,355.5 410.8,362.0 410.2,362.8 411.8,365.8 411.2,372.0 410.0,375.2 404.0,381.2 398.5,385.0 391.2,388.0 381.5,390.8 364.8,392.8 346.2,391.8 328.5,386.8 323.2,383.8 315.8,377.5 313.0,373.5 313.5,373.0 312.2,371.0Z"/>
<path fill="#ffa34d" fill-rule="evenodd" d="M173.2,390.2 175.8,395.5 183.8,402.0 197.5,408.2 219.2,415.5 342.2,451.0 367.0,457.5 390.2,461.8 409.0,462.0 420.0,460.0 429.8,456.5 442.8,449.0 456.8,438.2 530.5,374.0 537.5,367.0 543.5,359.5 546.2,353.8 546.8,349.2 544.2,343.0 537.0,336.8 524.5,330.8 503.2,323.5 358.0,282.0 332.0,277.0 312.0,276.8 300.2,279.0 291.2,282.2 281.0,287.8 263.8,300.5 188.5,365.8 182.0,372.2 176.0,379.8 173.5,385.2ZM311.0,369.0 311.5,364.0 313.8,359.8 318.0,355.0 324.8,350.5 332.2,347.2 341.0,344.8 359.0,342.5 370.8,342.8 381.2,344.2 388.2,346.0 398.0,349.8 408.2,357.2 409.8,360.0 411.2,361.0 411.0,362.2 412.8,366.0 412.2,372.0 409.5,376.8 405.8,380.8 399.0,385.2 394.2,387.5 383.8,390.8 374.0,392.5 363.8,393.2 353.5,393.0 344.0,391.8 336.5,390.0 325.8,386.0 316.0,379.0 313.8,375.2 312.2,374.2 312.8,373.5Z"/>
<path fill="#ffab45" fill-rule="evenodd" d="M175.2,389.5 178.0,395.5 186.0,401.8 198.0,407.2 219.5,414.5 363.0,455.5 388.2,460.5 396.8,461.2 408.2,461.0 420.2,458.8 429.5,455.2 441.5,448.2 455.5,437.5 531.2,371.2 541.8,359.0 544.2,353.5 544.5,348.5 541.5,342.5 533.8,336.5 520.5,330.5 499.5,323.5 354.5,282.2 331.2,278.0 313.0,277.8 301.0,280.0 291.5,283.5 281.5,289.0 266.2,300.2 188.2,368.0 178.2,379.5 175.5,385.5ZM310.8,363.0 316.0,355.8 321.2,351.8 328.5,348.0 343.5,343.8 360.2,342.0 371.0,342.2 380.2,343.5 396.0,348.2 401.2,350.8 408.2,356.2 412.0,361.2 413.8,365.8 413.2,372.0 411.2,375.8 407.8,380.0 401.2,384.8 395.2,387.8 384.0,391.2 371.2,393.2 360.5,393.8 348.8,393.0 339.0,391.2 330.2,388.5 321.8,384.5 315.5,379.5 311.8,374.5 310.0,369.8Z"/>
<path fill="#ffb33d" fill-rule="evenodd" d="M177.5,390.0 179.8,394.8 183.0,398.0 188.8,401.8 203.2,408.0 221.5,414.0 363.2,454.5 388.8,459.5 398.5,460.2 409.5,459.8 420.2,457.5 432.5,452.2 443.0,445.5 457.8,433.8 519.0,380.5 533.2,367.0 538.2,361.0 541.5,355.2 542.2,348.5 539.5,343.0 531.8,337.0 519.8,331.5 497.2,324.0 355.0,283.5 330.2,279.0 312.2,279.0 300.2,281.5 287.5,287.0 278.8,292.5 265.8,302.5 192.5,366.0 184.0,374.8 179.8,380.5 177.8,385.0ZM309.2,365.5 312.0,359.0 316.8,354.0 327.0,348.0 336.5,344.8 346.0,342.8 366.8,341.5 377.8,342.5 388.2,344.8 396.0,347.5 403.5,351.5 410.0,357.0 412.5,360.8 414.2,365.2 414.5,370.5 412.2,376.0 409.0,380.0 403.5,384.2 396.8,387.8 380.5,392.5 368.8,394.0 358.2,394.2 344.8,393.0 335.8,391.0 328.5,388.5 320.8,384.5 314.0,379.0 311.8,375.8 309.5,370.5Z"/>
<path fill="#ffbc34" fill-rule="evenodd" d="M179.8,389.8 182.0,394.5 185.0,397.5 190.8,401.2 201.2,406.0 222.8,413.2 366.8,454.2 391.8,458.8 408.0,458.8 416.5,457.2 426.5,453.8 436.5,448.2 451.2,437.2 525.0,373.0 533.2,364.5 537.5,358.8 539.8,353.8 540.0,348.8 537.8,344.0 530.5,338.0 517.5,332.0 499.0,325.8 353.2,284.2 331.2,280.2 312.0,280.2 304.0,281.8 294.0,285.2 282.8,291.5 269.0,301.8 195.0,365.8 187.8,373.0 182.2,380.0 180.0,385.0ZM308.0,366.2 309.5,361.2 312.5,356.8 317.2,352.5 325.8,347.8 336.0,344.2 345.5,342.2 357.5,341.0 368.2,341.0 378.5,342.0 388.0,344.0 396.0,346.8 402.5,350.0 407.0,353.0 412.2,358.5 415.0,363.8 415.8,369.8 413.8,375.5 409.0,381.2 403.0,385.5 396.8,388.5 386.8,391.8 378.0,393.5 365.2,394.8 356.2,394.8 339.0,392.5 329.8,389.8 322.2,386.2 317.5,383.2 311.8,377.5 309.2,373.2Z"/>
<path fill="#ffc52b" fill-rule="evenodd" d="M182.0,389.0 185.0,395.0 191.5,400.0 202.8,405.2 225.0,412.8 366.2,453.0 390.8,457.5 408.2,457.5 418.0,455.5 428.5,451.2 437.2,446.0 451.0,435.5 524.8,371.0 534.8,359.5 537.2,354.2 537.8,350.0 535.5,344.5 527.8,338.2 514.5,332.2 496.5,326.2 356.5,286.2 333.8,281.8 325.5,281.0 314.2,281.2 303.5,283.2 295.8,286.0 285.5,291.5 270.5,302.5 196.0,367.0 188.5,374.8 184.2,380.5 182.5,384.2ZM416.8,366.2 416.5,371.8 414.5,376.5 411.2,380.5 404.2,385.8 397.5,389.0 389.2,391.8 377.2,394.2 367.2,395.2 354.0,395.2 343.0,394.0 326.5,389.2 319.0,385.2 312.0,379.2 309.8,376.5 307.0,369.2 307.2,364.2 309.2,359.2 312.5,355.2 319.5,350.0 327.5,346.2 337.2,343.2 350.2,341.0 362.8,340.2 382.5,342.0 397.5,346.5 405.2,350.8 412.2,357.0 415.8,362.5Z"/>
<path fill="#ffce22" fill-rule="evenodd" d="M184.5,389.0 185.5,392.0 187.5,394.8 193.8,399.5 207.0,405.5 228.2,412.5 366.0,451.8 388.0,456.0 405.5,456.5 413.5,455.2 423.5,452.0 432.5,447.2 448.5,435.5 483.5,404.2 521.0,372.2 528.5,364.5 532.8,358.8 535.0,353.5 535.2,350.8 534.5,347.5 532.2,344.0 524.5,338.2 513.2,333.2 496.2,327.5 435.5,310.8 375.0,292.5 352.2,286.5 331.5,282.8 315.0,282.5 304.2,284.5 296.0,287.5 286.8,292.5 272.8,302.8 240.2,331.5 199.5,366.0 192.0,373.5 186.5,380.8 184.5,386.0ZM305.8,365.0 308.0,359.0 312.2,354.0 319.0,349.2 327.2,345.5 336.2,342.8 346.8,340.8 357.2,339.8 369.5,339.8 379.5,340.8 390.0,343.0 403.0,348.2 409.5,352.8 413.5,356.8 417.2,363.0 418.2,368.2 416.8,375.0 413.5,379.8 408.0,384.5 400.8,388.5 390.2,392.2 380.0,394.5 365.5,396.0 355.5,396.0 344.8,395.0 335.0,393.0 326.8,390.2 319.2,386.5 313.8,382.5 308.8,377.0 306.5,372.8Z"/>
<path fill="#ffd61a" fill-rule="evenodd" d="M187.0,387.8 188.8,392.8 195.8,398.8 209.5,405.0 226.8,410.8 366.0,450.5 390.5,455.0 406.8,455.0 417.2,452.8 425.2,449.5 436.8,442.5 445.2,436.0 483.0,402.2 520.2,370.5 529.8,359.5 532.2,354.0 532.5,350.2 530.5,345.5 522.8,339.2 510.5,333.8 492.5,327.8 435.5,312.2 378.0,294.8 354.0,288.2 330.8,284.0 314.2,284.0 305.2,285.8 297.0,288.8 285.5,295.2 274.5,303.5 242.5,332.0 201.2,366.8 190.5,378.5 187.8,383.5ZM304.2,365.2 305.5,360.8 309.2,355.2 316.5,349.5 323.5,346.0 332.2,343.0 345.2,340.2 358.0,339.0 369.5,339.0 381.5,340.2 390.5,342.2 398.5,345.0 405.0,348.2 412.0,353.5 417.2,360.0 419.2,365.2 419.5,370.8 418.2,375.0 414.8,380.2 408.0,385.8 400.8,389.5 389.5,393.2 378.2,395.5 356.0,396.8 344.5,395.8 334.5,393.8 325.0,390.5 317.8,386.8 313.0,383.2 306.8,376.0 304.5,370.2Z"/>
<path fill="#ffdd13" fill-rule="evenodd" d="M190.0,389.0 192.0,393.0 199.8,399.0 212.2,404.5 228.0,409.8 287.0,426.0 341.5,442.5 369.5,450.0 389.0,453.5 405.0,453.8 414.2,452.0 423.0,448.8 433.0,443.0 445.5,433.5 480.2,402.0 517.2,370.8 523.2,364.5 527.8,358.2 529.5,353.8 529.5,350.0 527.5,345.8 523.5,342.0 519.0,339.2 509.5,335.0 491.8,329.0 429.8,312.2 379.8,296.8 352.2,289.2 331.5,285.5 314.5,285.5 306.8,287.0 297.8,290.2 287.5,296.0 275.5,305.0 243.5,333.8 204.5,366.2 197.0,373.8 192.5,379.5 190.2,384.2ZM302.8,364.5 305.2,358.0 310.5,352.2 316.0,348.5 322.8,345.2 331.8,342.2 343.2,339.8 357.0,338.2 371.0,338.2 382.5,339.5 391.5,341.5 400.0,344.5 407.5,348.5 412.8,352.5 418.2,359.0 420.5,364.0 421.2,369.2 420.2,374.2 417.2,379.5 412.0,384.5 401.5,390.2 391.0,393.8 380.2,396.0 365.2,397.5 354.5,397.5 342.0,396.2 332.8,394.2 323.0,390.8 316.5,387.2 311.8,383.8 305.0,375.8 303.0,370.5Z"/>
<path fill="#ffe40c" fill-rule="evenodd" d="M193.0,388.5 195.8,393.5 201.8,398.0 212.0,402.8 231.2,409.2 298.8,427.8 365.0,447.5 388.5,452.0 404.2,452.2 413.5,450.5 421.5,447.5 429.2,443.2 442.5,433.5 479.5,399.8 513.5,371.5 523.8,360.0 526.0,355.5 526.5,350.8 524.2,346.0 516.8,340.2 507.5,336.0 489.0,329.8 430.5,314.2 381.0,298.8 353.2,291.0 331.0,287.0 315.8,287.0 307.8,288.5 298.8,291.8 289.8,296.8 278.2,305.2 246.2,334.2 205.0,368.5 195.2,379.8 193.2,384.2ZM301.0,364.0 303.2,358.0 308.5,352.0 314.8,347.8 323.0,344.0 330.8,341.5 344.0,338.8 355.0,337.5 369.5,337.2 381.0,338.2 392.0,340.5 399.5,343.0 407.5,347.0 414.5,352.2 419.2,357.8 422.2,364.0 423.0,370.0 422.0,374.8 418.8,380.2 411.5,386.5 402.0,391.2 388.8,395.2 377.8,397.2 367.5,398.2 351.5,398.2 340.5,397.0 329.8,394.5 321.2,391.2 313.5,386.8 307.2,381.2 303.2,375.8 301.0,369.2Z"/>
<path fill="#ffeb05" fill-rule="evenodd" d="M196.2,387.8 198.8,392.8 205.5,397.8 214.8,402.0 233.2,408.2 290.2,423.5 345.2,440.5 367.2,446.5 389.2,450.5 404.2,450.5 413.8,448.5 421.8,445.2 432.0,439.0 442.2,431.0 475.5,400.0 510.0,371.8 516.2,365.5 521.0,359.2 523.0,354.2 523.0,350.8 520.0,345.5 513.8,341.0 502.5,336.0 485.8,330.5 428.8,315.8 375.2,298.8 350.5,292.0 331.8,288.8 316.0,288.8 307.5,290.5 300.8,293.0 292.8,297.2 279.8,306.8 248.2,335.8 209.8,367.0 203.0,373.8 198.2,380.0 196.5,384.0ZM299.0,363.8 301.2,357.5 306.8,351.2 312.2,347.5 321.5,343.2 332.2,340.0 347.5,337.2 371.0,336.2 382.2,337.2 393.2,339.5 403.0,343.0 409.5,346.5 416.2,351.8 421.8,358.5 424.2,364.2 425.0,370.5 423.8,375.8 420.8,380.8 412.8,387.5 403.5,392.0 391.2,395.8 377.5,398.2 366.8,399.2 351.0,399.2 339.5,398.0 328.8,395.5 320.8,392.5 312.8,388.0 306.8,383.0 301.8,376.5 299.2,370.2Z"/>
<path fill="#fff10d" fill-rule="evenodd" d="M200.0,387.8 201.8,391.5 208.8,397.0 218.0,401.2 235.0,407.0 292.2,422.0 343.8,438.2 370.2,445.5 387.0,448.5 402.8,448.8 412.5,446.8 423.2,442.0 431.0,437.0 440.8,429.2 471.5,399.8 507.5,370.8 517.0,360.0 519.0,355.8 519.2,351.2 517.5,347.5 511.5,342.5 504.0,338.8 487.8,333.0 418.8,315.2 377.8,301.5 358.2,295.8 335.5,291.0 318.2,290.5 309.0,292.2 301.0,295.2 293.8,299.2 283.8,306.5 252.2,336.0 213.2,367.0 202.5,378.8 200.2,383.5ZM296.8,362.8 299.0,356.8 304.5,350.5 310.5,346.5 318.8,342.8 331.2,339.0 344.8,336.5 362.8,335.0 375.8,335.2 388.0,336.8 396.2,338.8 403.8,341.5 413.0,346.8 420.0,353.0 424.0,358.5 427.0,366.2 427.2,371.8 424.5,379.5 419.2,385.2 412.8,389.5 403.5,393.5 390.0,397.2 376.2,399.5 364.0,400.5 347.5,400.2 336.0,398.8 327.8,396.8 320.2,394.0 311.2,389.0 302.8,381.2 299.5,376.5 297.0,370.0Z"/>
<path fill="#fff440" fill-rule="evenodd" d="M204.0,386.5 205.8,390.8 211.8,395.8 222.5,400.8 235.0,405.0 295.8,420.5 344.0,436.2 371.0,443.8 389.2,446.8 403.2,446.5 410.2,445.0 417.0,442.5 424.8,438.2 435.2,430.5 467.8,398.5 504.2,370.0 513.2,359.5 515.0,355.0 515.0,351.8 512.8,347.5 506.5,342.8 496.0,338.0 484.0,334.0 420.0,318.5 371.5,301.8 350.0,295.8 332.5,292.8 318.2,292.8 309.8,294.5 302.0,297.5 296.5,300.5 286.8,307.5 256.0,337.2 228.2,358.0 214.8,369.2 206.8,378.2 204.8,382.0ZM294.0,362.0 296.2,355.8 301.2,350.0 311.0,344.0 321.0,340.2 336.5,336.5 350.5,334.5 360.0,333.8 380.2,334.0 391.2,335.5 401.2,338.2 409.5,342.0 416.2,346.5 422.0,352.0 426.5,358.2 429.5,365.8 430.0,372.8 427.2,380.5 422.5,385.8 415.8,390.2 407.8,393.8 393.0,398.0 376.5,400.8 364.8,401.8 344.5,401.5 333.5,400.0 323.2,397.2 314.8,393.5 307.5,388.8 301.2,382.8 297.5,377.5 294.2,369.2Z"/>
<path fill="#fff773" fill-rule="evenodd" d="M209.0,387.0 211.0,390.8 217.2,395.5 224.8,399.0 237.8,403.5 257.2,408.8 302.8,419.2 351.8,436.2 367.8,440.8 387.0,444.2 401.0,444.2 408.5,442.8 415.2,440.2 423.8,435.5 431.8,429.5 443.2,418.5 455.2,404.5 462.8,397.0 489.8,377.8 500.0,369.5 508.0,360.5 510.0,355.8 510.0,352.2 508.2,348.8 502.0,343.8 492.0,339.2 481.5,335.8 464.2,331.2 415.2,321.0 376.0,306.0 353.5,299.0 333.5,295.2 319.5,295.2 312.8,296.5 305.0,299.2 296.5,304.0 290.8,308.2 280.2,318.0 267.2,332.8 261.0,338.8 252.2,345.5 231.8,359.2 218.2,370.2 210.5,379.5 209.0,383.2ZM433.5,370.5 432.8,377.8 429.5,383.8 422.8,389.5 412.8,394.2 397.2,398.8 378.8,402.0 361.0,403.5 346.0,403.5 335.2,402.5 323.8,400.0 313.0,395.5 306.2,391.0 299.0,384.0 293.5,375.8 291.0,368.8 290.5,361.0 292.8,354.2 297.5,348.8 305.5,343.8 317.5,339.2 334.5,335.2 347.8,333.2 367.8,331.8 382.8,332.0 393.2,333.2 404.2,336.2 409.8,338.8 417.0,343.5 424.5,350.8 428.5,356.2 431.5,362.2Z"/>
<path fill="#fffaa5" fill-rule="evenodd" d="M214.8,386.2 216.8,390.0 221.0,393.5 228.5,397.2 239.8,401.2 261.2,406.8 292.2,412.2 308.2,416.0 346.8,431.5 365.8,437.5 384.5,441.2 398.5,441.5 406.5,440.0 412.8,437.8 419.8,434.0 427.2,428.5 438.0,417.8 450.0,400.2 455.2,394.5 463.0,389.0 485.0,376.2 495.5,368.2 502.8,359.8 504.0,356.5 504.0,353.0 502.2,349.5 497.0,345.2 491.0,342.2 479.8,338.2 450.5,331.8 408.8,327.0 382.2,312.5 359.8,303.8 338.5,298.8 331.2,298.0 321.0,298.2 315.2,299.2 306.8,302.2 295.2,309.5 285.8,318.8 273.8,335.8 268.5,341.2 260.5,346.8 239.2,358.8 223.2,370.8 216.2,379.0 214.8,382.8ZM438.2,372.8 437.8,381.2 434.5,387.0 428.0,391.8 417.2,396.0 395.5,401.2 373.2,404.5 348.5,406.0 331.8,405.2 324.2,404.0 315.8,401.2 306.8,396.0 299.2,389.2 292.0,379.8 288.5,373.0 285.8,363.2 285.8,356.2 288.5,349.8 293.5,345.2 302.5,341.0 317.0,336.8 335.8,333.0 359.8,330.0 380.0,328.8 401.8,329.0 408.2,330.8 412.2,333.2 424.2,344.8 432.8,356.8 436.0,363.8Z"/>
<path fill="#fffdcc" fill-rule="evenodd" d="M434.5,404.5 432.8,401.8 430.2,400.5 420.0,400.2 379.2,406.2 337.8,411.0 332.5,412.8 331.2,415.2 334.0,419.0 339.2,422.8 348.2,427.5 358.2,431.5 379.0,437.0 387.5,438.0 397.8,437.8 410.2,434.2 418.5,429.5 424.2,424.8 431.8,415.5 434.2,409.8ZM222.2,381.2 222.5,386.8 226.5,391.2 235.0,395.8 248.0,400.0 266.0,403.8 283.8,405.5 294.5,405.0 298.0,403.8 299.2,402.2 298.2,397.5 287.0,379.8 277.8,360.8 273.8,356.0 271.2,354.8 266.5,354.2 258.5,355.8 243.5,362.0 235.0,367.2 228.5,372.5 224.5,377.0ZM431.5,340.5 433.0,347.2 446.5,375.0 449.8,379.0 453.2,380.8 458.8,381.0 464.8,379.8 479.5,373.5 491.2,365.0 494.2,361.5 496.2,357.5 496.2,353.5 492.8,348.8 485.5,344.5 474.0,340.5 460.2,337.5 449.8,336.2 436.5,336.8 433.0,338.2ZM289.8,330.2 290.5,332.5 294.2,335.0 306.0,335.0 368.0,325.8 376.2,323.2 378.0,321.8 378.2,319.5 375.0,315.8 369.5,312.2 354.0,306.0 337.0,302.2 323.5,302.0 311.0,305.2 300.5,311.8 295.2,317.0 292.0,321.8 290.0,326.8Z"/>
<path fill="#fffff3" fill-rule="evenodd" d="M420.0,413.0 417.8,409.8 412.5,407.8 404.0,407.2 393.0,408.0 375.5,410.2 362.0,413.0 355.8,415.5 353.8,417.5 353.5,419.2 354.2,421.0 359.0,425.0 370.8,430.0 382.2,432.5 394.2,432.8 404.5,430.2 412.8,425.5 418.5,419.2 420.0,415.5ZM232.2,381.2 232.5,385.0 236.0,389.2 243.8,393.2 254.2,396.2 264.2,397.8 274.0,397.8 280.0,396.2 282.8,394.0 283.5,392.2 283.5,389.0 282.2,384.8 276.0,373.5 270.5,367.8 264.0,365.0 255.2,365.2 249.2,367.0 243.0,370.0 238.2,373.2 234.5,377.0ZM444.2,348.8 445.5,355.8 449.2,362.5 454.2,367.5 459.8,369.8 465.2,370.0 473.8,367.8 480.2,364.0 483.5,360.8 485.0,357.8 484.8,354.0 481.5,350.2 476.5,347.5 467.8,344.8 460.0,343.5 450.8,343.8 446.0,345.8ZM305.8,323.0 307.2,325.2 312.0,327.2 329.2,327.2 352.0,323.2 358.0,320.5 359.2,318.0 358.5,316.2 355.2,313.5 346.5,309.8 337.2,307.8 326.8,307.5 317.2,309.8 311.8,312.8 307.0,317.5 305.8,320.2Z"/>
<path fill="#ffffff" fill-rule="evenodd" d=""/></g>
<polygon points="272.0,200.7 697.0,323.0 452.0,535.3 27.0,413.0" fill="none" stroke="#a040e0" stroke-width="1"/>
<g opacity="0.85" shape-rendering="crispEdges"><line x1="27.0" y1="227.9" x2="452.0" y2="350.0" stroke="#1c1cff" stroke-width="1.92"/>
<line x1="452.0" y1="350.0" x2="697.0" y2="137.3" stroke="#1c1cff" stroke-width="1.51"/>
<line x1="452.0" y1="350.0" x2="452.0" y2="721.0" stroke="#1c1cff" stroke-width="2.00"/>
<line x1="484.0" y1="77.2" x2="240.0" y2="289.2" stroke="#9a22cc" stroke-width="1.51"/>
<line x1="240.0" y1="289.2" x2="240.0" y2="658.8" stroke="#9a22cc" stroke-width="2.00"/>
<line x1="361.5" y1="183.6" x2="361.5" y2="368.3" stroke="#9a22cc" stroke-width="1.00"/>
<line x1="149.5" y1="306.9" x2="574.5" y2="429.1" stroke="#8a18d8" stroke-width="1.00" stroke-dasharray="2 1.4"/>
<line x1="484.5" y1="261.8" x2="239.5" y2="474.1" stroke="#8a18d8" stroke-width="1.00" stroke-dasharray="2 1.4"/></g>

<rect x="724.5" y="19.5" width="140" height="340" fill="#f3f3f3" stroke="#000" stroke-width="1"/>
<g fill="none" stroke="#fff" stroke-width="1">
<rect x="725.5" y="20.5" width="138" height="23"/>
<rect x="725.5" y="45.5" width="138" height="24"/>
<rect x="725.5" y="71.5" width="138" height="194"/>
<rect x="725.5" y="267.5" width="138" height="91"/>
</g>
<g stroke="#000" stroke-width="1">
<line x1="724" y1="44.5" x2="865" y2="44.5"/>
<line x1="724" y1="70.5" x2="865" y2="70.5"/>
<line x1="724" y1="266.5" x2="865" y2="266.5"/>
</g>
<defs><linearGradient id="cb" x1="0" y1="1" x2="0" y2="0"><stop offset="0.000" stop-color="#000008"/><stop offset="0.009" stop-color="#000010"/><stop offset="0.058" stop-color="#000040"/><stop offset="0.115" stop-color="#000070"/><stop offset="0.171" stop-color="#0000a0"/><stop offset="0.228" stop-color="#0000d0"/><stop offset="0.284" stop-color="#1000f0"/><stop offset="0.340" stop-color="#3000ff"/><stop offset="0.397" stop-color="#7000f8"/><stop offset="0.453" stop-color="#a010e0"/><stop offset="0.502" stop-color="#c030c8"/><stop offset="0.557" stop-color="#e040b8"/><stop offset="0.607" stop-color="#ff50a0"/><stop offset="0.663" stop-color="#ff7880"/><stop offset="0.720" stop-color="#ff9060"/><stop offset="0.783" stop-color="#ffb040"/><stop offset="0.839" stop-color="#ffd020"/><stop offset="0.910" stop-color="#fff000"/><stop offset="0.959" stop-color="#fffaa0"/><stop offset="0.994" stop-color="#fffff8"/><stop offset="1.000" stop-color="#ffffff"/></linearGradient></defs>
<rect x="739" y="81" width="21" height="169.5" fill="url(#cb)"/>
<g font-family="Liberation Sans, sans-serif" font-size="14" fill="#000">
<text x="738.6" y="36.3" letter-spacing="0.4">EMagTotal</text>
<text x="738.6" y="62.2" letter-spacing="0.2">Type: Linear</text>
<text x="786.5" y="87.7" text-anchor="middle">488</text>
<text x="786.5" y="104.7" text-anchor="middle">439</text>
<text x="786.5" y="121.7" text-anchor="middle">390</text>
<text x="786.5" y="138.7" text-anchor="middle">341</text>
<text x="786.5" y="155.7" text-anchor="middle">292</text>
<text x="786.5" y="172.7" text-anchor="middle">244</text>
<text x="786.5" y="189.7" text-anchor="middle">195</text>
<text x="786.5" y="206.7" text-anchor="middle">146</text>
<text x="786.5" y="223.7" text-anchor="middle">97</text>
<text x="786.5" y="240.7" text-anchor="middle">48</text>
<text x="786.5" y="257.7" text-anchor="middle">0</text>
<text x="738.6" letter-spacing="0.4" y="282.6">Max: 488</text>
<text x="738.6" letter-spacing="0.4" y="299.6">Min: 0</text>
<text x="738.6" letter-spacing="0.4" y="316.6">Units: V/m</text>
<text x="738.6" letter-spacing="0.4" y="333.6">Mean: 239</text>
<text x="738.6" letter-spacing="0.4" y="350.6">STD: 177</text>
</g>
</svg></body></html>
